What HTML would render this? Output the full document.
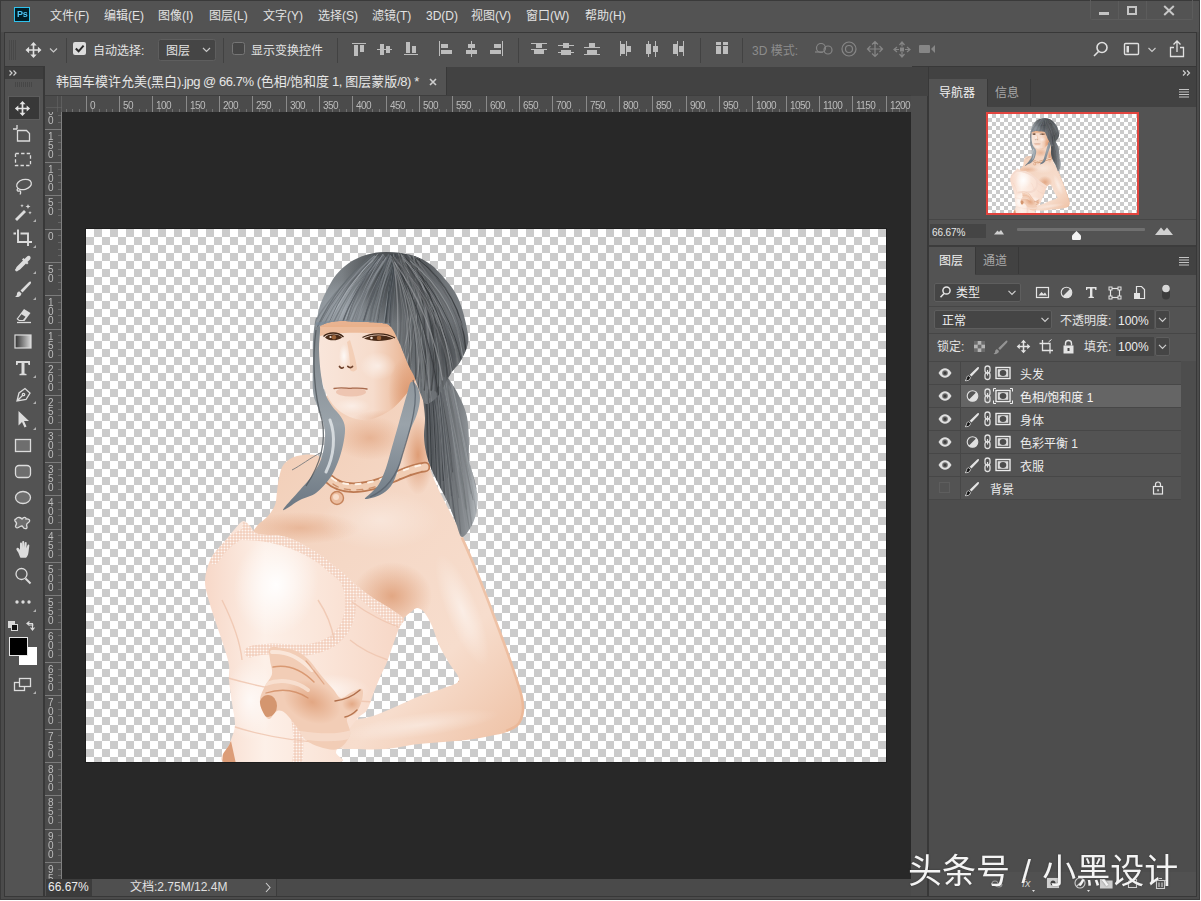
<!DOCTYPE html>
<html lang="zh-CN">
<head>
<meta charset="utf-8">
<title>Photoshop</title>
<style>
*{box-sizing:border-box;margin:0;padding:0}
html,body{width:1201px;height:901px;overflow:hidden;background:#fff}
body{font-family:"Liberation Sans","Noto Sans CJK SC",sans-serif;font-size:12px;color:#dedede;position:relative}
.a{position:absolute}
.t{position:absolute;white-space:nowrap;line-height:16px;height:16px}
#win{position:absolute;left:0;top:0;width:1200px;height:900px;background:#535353;overflow:hidden}
svg{position:absolute;overflow:visible}
.l{letter-spacing:-.45px}
.mn{color:#e2e2e2;font-size:12px}
</style>
</head>
<body>
<div id="win">
<!-- ===== window frame & base regions ===== -->
<div class="a" style="left:0;top:0;width:1200px;height:900px;background:#4b4b4b"></div>
<div class="a" style="left:1px;top:1px;width:1198px;height:31px;background:#535353"></div>
<!-- options bar -->
<div class="a" style="left:4px;top:32px;width:1193px;height:35px;background:#535353;border:1px solid #383838"></div>
<!-- left toolbar -->
<div class="a" style="left:4px;top:66px;width:40px;height:831px;background:#535353;border:1px solid #383838"></div>
<div class="a" style="left:5px;top:67px;width:38px;height:12px;background:#3e3e3e"></div>
<!-- document area -->
<div class="a" style="left:44px;top:66px;width:868px;height:831px;background:#535353;border-left:1px solid #383838"></div>
<div class="a" style="left:46px;top:67px;width:866px;height:29px;background:#424242"></div>
<div class="a" style="left:46px;top:67px;width:401px;height:29px;background:#535353;border-right:1px solid #383838"></div>
<!-- canvas -->
<div class="a" style="left:62px;top:112px;width:849px;height:767px;background:#282828"></div>
<!-- status bar -->
<div class="a" style="left:46px;top:879px;width:865px;height:17px;background:#4a4a4a"></div>
<div class="a" style="left:4px;top:896px;width:1193px;height:1px;background:#383838"></div>
<!-- gutter between doc and panels -->
<div class="a" style="left:911px;top:67px;width:16px;height:829px;background:#4d4d4d"></div>
<div class="a" style="left:927px;top:67px;width:2px;height:829px;background:#383838"></div>
<!-- right panel column -->
<div class="a" style="left:929px;top:67px;width:267px;height:829px;background:#535353"></div>
<div class="a" style="left:929px;top:67px;width:267px;height:12px;background:#424242"></div>
<div class="a" style="left:1196px;top:32px;width:1px;height:865px;background:#383838"></div>
<!-- outer edge -->
<div class="a" style="left:0;top:0;width:1200px;height:900px;border:1px solid #3a3a3a"></div>
<!-- ===== menu bar ===== -->
<div class="a" style="left:14px;top:7px;width:16px;height:15px;background:#001d26;border:1px solid #2fc2ee"></div>
<div class="t" style="left:17px;top:7px;font-size:9px;font-weight:bold;line-height:15px;height:15px;color:#4fc6f5;letter-spacing:-.3px;will-change:transform">Ps</div>
<div class="t mn" style="left:50px;top:8px">文件(F)</div>
<div class="t mn" style="left:104px;top:8px">编辑(E)</div>
<div class="t mn" style="left:158px;top:8px">图像(I)</div>
<div class="t mn" style="left:209px;top:8px">图层(L)</div>
<div class="t mn" style="left:263px;top:8px">文字(Y)</div>
<div class="t mn" style="left:318px;top:8px">选择(S)</div>
<div class="t mn" style="left:372px;top:8px">滤镜(T)</div>
<div class="t mn" style="left:426px;top:8px">3D(D)</div>
<div class="t mn" style="left:471px;top:8px">视图(V)</div>
<div class="t mn" style="left:526px;top:8px">窗口(W)</div>
<div class="t mn" style="left:585px;top:8px">帮助(H)</div>
<!-- window controls -->
<div class="a" style="left:1090px;top:0;width:103px;height:20px;border:1px solid #5c5c5c;border-top:none;border-radius:0 0 2px 2px"></div>
<div class="a" style="left:1118px;top:1px;width:1px;height:18px;background:#5c5c5c"></div>
<div class="a" style="left:1146px;top:1px;width:1px;height:18px;background:#5c5c5c"></div>
<div class="a" style="left:1099px;top:12px;width:10px;height:3px;background:#c4c4c4"></div>
<div class="a" style="left:1127px;top:6px;width:10px;height:9px;border:2px solid #c4c4c4;border-top-width:2px"></div>
<svg style="left:1163px;top:5px" width="12" height="11" viewBox="0 0 12 11"><path d="M1.2 1 L10.8 10 M10.8 1 L1.2 10" stroke="#c8c8c8" stroke-width="2" fill="none"/></svg>
<!-- ===== options bar ===== -->
<svg style="left:0;top:32px" width="1200" height="35" viewBox="0 32 1200 35">
 <!-- grip -->
 <g fill="#484848"><rect x="9" y="40" width="1" height="20"/><rect x="11" y="40" width="1" height="20"/><rect x="13" y="40" width="1" height="20"/><rect x="15" y="40" width="1" height="20"/></g>
 <!-- move tool -->
 <g fill="#e0e0e0" stroke="none">
  <path d="M33.5 42 l3.2 3.6 h-2.4 v3.6 h3.6 v-2.4 l3.6 3.2 l-3.6 3.2 v-2.4 h-3.6 v3.6 h2.4 l-3.2 3.6 l-3.2 -3.6 h2.4 v-3.6 h-3.6 v2.4 l-3.6 -3.2 l3.6 -3.2 v2.4 h3.6 v-3.6 h-2.4 z"/>
 </g>
 <path d="M50 48.5 l3.5 3.5 l3.5 -3.5" fill="none" stroke="#c8c8c8" stroke-width="1.2"/>
 <!-- separators -->
 <g fill="#424242"><rect x="66" y="38" width="1" height="25"/><rect x="223" y="38" width="1" height="25"/><rect x="337" y="38" width="1" height="25"/><rect x="518" y="38" width="1" height="25"/><rect x="700" y="38" width="1" height="25"/><rect x="742" y="38" width="1" height="25"/></g>
 <!-- checkbox checked -->
 <rect x="73" y="42" width="13" height="13" rx="2" fill="#dcdcdc"/>
 <path d="M75.8 48.5 l2.8 2.8 l5 -5.6" fill="none" stroke="#2a2a2a" stroke-width="2"/>
 <!-- dropdown -->
 <rect x="158.5" y="39.5" width="57" height="21" rx="2" fill="#454545" stroke="#5e5e5e"/>
 <path d="M203 48 l3.5 3.5 l3.5 -3.5" fill="none" stroke="#c8c8c8" stroke-width="1.2"/>
 <!-- checkbox unchecked -->
 <rect x="232.5" y="42.5" width="12" height="12" rx="2" fill="#464646" stroke="#767676"/>
 <!-- align icons -->
 <g fill="#bdbdbd">
  <rect x="352" y="43" width="14" height="1"/><rect x="354" y="45" width="4" height="11"/><rect x="360" y="45" width="4" height="7"/>
  <rect x="377" y="49" width="15" height="1"/><rect x="380" y="44" width="4" height="11"/><rect x="386" y="46" width="4" height="7"/>
  <rect x="404" y="54" width="14" height="1"/><rect x="406" y="42" width="4" height="11"/><rect x="412" y="46" width="4" height="7"/>
  <rect x="439" y="41" width="1" height="15"/><rect x="441" y="44" width="7" height="4"/><rect x="441" y="50" width="11" height="4"/>
  <rect x="471" y="41" width="1" height="16"/><rect x="468" y="44" width="7" height="4"/><rect x="466" y="50" width="11" height="4"/>
  <rect x="502" y="41" width="1" height="15"/><rect x="494" y="44" width="7" height="4"/><rect x="490" y="50" width="11" height="4"/>
  <!-- distribute -->
  <rect x="531" y="43" width="16" height="1"/><rect x="536" y="44" width="6" height="4"/><rect x="531" y="49" width="16" height="1"/><rect x="534" y="50" width="10" height="4"/>
  <rect x="558" y="45" width="16" height="1"/><rect x="563" y="43" width="6" height="5"/><rect x="558" y="52" width="16" height="1"/><rect x="561" y="50" width="10" height="5"/>
  <rect x="584" y="47" width="16" height="1"/><rect x="589" y="43" width="6" height="4"/><rect x="584" y="54" width="16" height="1"/><rect x="587" y="50" width="10" height="4"/>
  <rect x="620" y="41" width="1" height="15"/><rect x="621" y="44" width="4" height="10"/><rect x="626" y="41" width="1" height="15"/><rect x="627" y="46" width="4" height="6"/>
  <rect x="648" y="41" width="1" height="16"/><rect x="646" y="44" width="5" height="10"/><rect x="655" y="41" width="1" height="16"/><rect x="653" y="46" width="5" height="6"/>
  <rect x="677" y="41" width="1" height="15"/><rect x="673" y="44" width="4" height="10"/><rect x="683" y="41" width="1" height="15"/><rect x="679" y="46" width="4" height="6"/>
  <!-- auto align -->
  <rect x="716" y="42" width="5" height="3"/><rect x="723" y="42" width="5" height="3"/><rect x="716" y="46" width="5" height="8"/><rect x="723" y="46" width="5" height="8"/>
 </g>
 <!-- 3D mode icons (dim) -->
 <g fill="none" stroke="#868686" stroke-width="1.2">
  <circle cx="821" cy="48" r="4.5"/><circle cx="828" cy="50" r="4"/><path d="M815 52 h8"/>
  <circle cx="849" cy="49" r="7"/><circle cx="849" cy="49" r="3.5"/>
  <path d="M875 42 v14 M868 49 h14 M872 44.5 l3 -3 l3 3 M872 53.5 l3 3 l3 -3 M870.5 46 l-3 3 l3 3 M879.5 46 l3 3 l-3 3"/>
  <path d="M902 42.5 v4 M902 52 v4.5 M895 49.5 h4 M905 49.5 h4.5 M899.5 45 l2.5 -3 l2.5 3 M899.5 54 l2.5 3 l2.5 -3 M897 47 l-3 2.500 l3 2.500 M907 47 l3 2.500 l-3 2.500"/>
 </g>
 <g fill="#868686"><rect x="900" y="47.500" width="4" height="4"/><rect x="919" y="45" width="11" height="8" rx="1"/><path d="M931 49 l4 -4 v8 z"/></g>
 <!-- right icons -->
 <g fill="none" stroke="#e0e0e0" stroke-width="1.6">
  <circle cx="1102" cy="47.5" r="5"/><path d="M1098.500 51.500 l-4.500 4.500"/>
 </g>
 <rect x="1124.500" y="43.500" width="14" height="11" rx="1" fill="none" stroke="#e0e0e0" stroke-width="1.4"/>
 <rect x="1126.500" y="46" width="2.500" height="6.500" fill="#e0e0e0"/>
 <path d="M1148.500 48 l3.500 3.500 l3.500 -3.500" fill="none" stroke="#c8c8c8" stroke-width="1.2"/>
 <g fill="none" stroke="#e0e0e0" stroke-width="1.3"><path d="M1174 47.500 h-3.500 v9 h13 v-9 h-3.500"/><path d="M1177 52 v-11 M1173.500 44.500 l3.500 -3.500 l3.500 3.500"/></g>
</svg>
<div class="t" style="left:93px;top:42.500px;color:#e2e2e2">自动选择:</div>
<div class="t" style="left:166px;top:42.500px;color:#e2e2e2">图层</div>
<div class="t" style="left:251px;top:42.500px;color:#e2e2e2">显示变换控件</div>
<div class="t" style="left:752px;top:42.500px;color:#8c8c8c">3D 模式:</div>
<!-- ===== document tab + rulers ===== -->
<div class="a" style="left:46px;top:67px;width:882px;height:29px;background:#424242"></div>
<div class="a" style="left:46px;top:67px;width:401px;height:29px;background:#535353;border-right:1px solid #383838"></div>
<div class="t" style="left:56px;top:73px;color:#e6e6e6;font-size:13px;line-height:18px;height:18px">韩国车模许允美<span class="l">(</span>黑白<span class="l">).jpg @ 66.7% (</span>色相<span class="l">/</span>饱和度<span class="l"> 1, </span>图层蒙版<span class="l">/8) *</span></div>
<svg style="left:429px;top:78px" width="8" height="8" viewBox="0 0 8 8"><path d="M1 1 L7 7 M7 1 L1 7" stroke="#cfcfcf" stroke-width="1.6" fill="none"/></svg>
<div class="a" style="left:45px;top:95px;width:866px;height:17px;background:#4b4b4b;border-top:1px solid #3e3e3e"></div>
<div class="a" style="left:45px;top:112px;width:17px;height:767px;background:#4b4b4b"></div>
<svg style="left:0;top:0" width="912" height="880" viewBox="0 0 912 880" font-family="Liberation Sans, sans-serif" font-size="10">
<defs><clipPath id="rc1"><rect x="62" y="96" width="849" height="16"/></clipPath><clipPath id="rc2"><rect x="45" y="112" width="17" height="767"/></clipPath></defs>
<g fill="#6a6a6a"><rect x="57" y="96" width="1" height="16" opacity=".5"/><rect x="46" y="107" width="16" height="1" opacity=".5"/><rect x="61" y="96" width="1" height="16" opacity=".6"/></g>
<g clip-path="url(#rc1)">
<g fill="#8a8a8a"><rect x="86" y="96" width="1" height="16"/><rect x="119" y="96" width="1" height="16"/><rect x="152" y="96" width="1" height="16"/><rect x="186" y="96" width="1" height="16"/><rect x="219" y="96" width="1" height="16"/><rect x="252" y="96" width="1" height="16"/><rect x="286" y="96" width="1" height="16"/><rect x="319" y="96" width="1" height="16"/><rect x="352" y="96" width="1" height="16"/><rect x="386" y="96" width="1" height="16"/><rect x="419" y="96" width="1" height="16"/><rect x="452" y="96" width="1" height="16"/><rect x="486" y="96" width="1" height="16"/><rect x="519" y="96" width="1" height="16"/><rect x="552" y="96" width="1" height="16"/><rect x="586" y="96" width="1" height="16"/><rect x="619" y="96" width="1" height="16"/><rect x="652" y="96" width="1" height="16"/><rect x="686" y="96" width="1" height="16"/><rect x="719" y="96" width="1" height="16"/><rect x="752" y="96" width="1" height="16"/><rect x="786" y="96" width="1" height="16"/><rect x="819" y="96" width="1" height="16"/><rect x="852" y="96" width="1" height="16"/><rect x="886" y="96" width="1" height="16"/></g>
<g fill="#707070"><rect x="66" y="109" width="1" height="3"/><rect x="72" y="109" width="1" height="3"/><rect x="79" y="109" width="1" height="3"/><rect x="92" y="109" width="1" height="3"/><rect x="99" y="109" width="1" height="3"/><rect x="106" y="109" width="1" height="3"/><rect x="112" y="109" width="1" height="3"/><rect x="126" y="109" width="1" height="3"/><rect x="132" y="109" width="1" height="3"/><rect x="139" y="109" width="1" height="3"/><rect x="146" y="109" width="1" height="3"/><rect x="159" y="109" width="1" height="3"/><rect x="166" y="109" width="1" height="3"/><rect x="172" y="109" width="1" height="3"/><rect x="179" y="109" width="1" height="3"/><rect x="192" y="109" width="1" height="3"/><rect x="199" y="109" width="1" height="3"/><rect x="206" y="109" width="1" height="3"/><rect x="212" y="109" width="1" height="3"/><rect x="226" y="109" width="1" height="3"/><rect x="232" y="109" width="1" height="3"/><rect x="239" y="109" width="1" height="3"/><rect x="246" y="109" width="1" height="3"/><rect x="259" y="109" width="1" height="3"/><rect x="266" y="109" width="1" height="3"/><rect x="272" y="109" width="1" height="3"/><rect x="279" y="109" width="1" height="3"/><rect x="292" y="109" width="1" height="3"/><rect x="299" y="109" width="1" height="3"/><rect x="306" y="109" width="1" height="3"/><rect x="312" y="109" width="1" height="3"/><rect x="326" y="109" width="1" height="3"/><rect x="332" y="109" width="1" height="3"/><rect x="339" y="109" width="1" height="3"/><rect x="346" y="109" width="1" height="3"/><rect x="359" y="109" width="1" height="3"/><rect x="366" y="109" width="1" height="3"/><rect x="372" y="109" width="1" height="3"/><rect x="379" y="109" width="1" height="3"/><rect x="392" y="109" width="1" height="3"/><rect x="399" y="109" width="1" height="3"/><rect x="406" y="109" width="1" height="3"/><rect x="412" y="109" width="1" height="3"/><rect x="426" y="109" width="1" height="3"/><rect x="432" y="109" width="1" height="3"/><rect x="439" y="109" width="1" height="3"/><rect x="446" y="109" width="1" height="3"/><rect x="459" y="109" width="1" height="3"/><rect x="466" y="109" width="1" height="3"/><rect x="472" y="109" width="1" height="3"/><rect x="479" y="109" width="1" height="3"/><rect x="492" y="109" width="1" height="3"/><rect x="499" y="109" width="1" height="3"/><rect x="506" y="109" width="1" height="3"/><rect x="512" y="109" width="1" height="3"/><rect x="526" y="109" width="1" height="3"/><rect x="532" y="109" width="1" height="3"/><rect x="539" y="109" width="1" height="3"/><rect x="546" y="109" width="1" height="3"/><rect x="559" y="109" width="1" height="3"/><rect x="566" y="109" width="1" height="3"/><rect x="572" y="109" width="1" height="3"/><rect x="579" y="109" width="1" height="3"/><rect x="592" y="109" width="1" height="3"/><rect x="599" y="109" width="1" height="3"/><rect x="606" y="109" width="1" height="3"/><rect x="612" y="109" width="1" height="3"/><rect x="626" y="109" width="1" height="3"/><rect x="632" y="109" width="1" height="3"/><rect x="639" y="109" width="1" height="3"/><rect x="646" y="109" width="1" height="3"/><rect x="659" y="109" width="1" height="3"/><rect x="666" y="109" width="1" height="3"/><rect x="672" y="109" width="1" height="3"/><rect x="679" y="109" width="1" height="3"/><rect x="692" y="109" width="1" height="3"/><rect x="699" y="109" width="1" height="3"/><rect x="706" y="109" width="1" height="3"/><rect x="712" y="109" width="1" height="3"/><rect x="726" y="109" width="1" height="3"/><rect x="732" y="109" width="1" height="3"/><rect x="739" y="109" width="1" height="3"/><rect x="746" y="109" width="1" height="3"/><rect x="759" y="109" width="1" height="3"/><rect x="766" y="109" width="1" height="3"/><rect x="772" y="109" width="1" height="3"/><rect x="779" y="109" width="1" height="3"/><rect x="792" y="109" width="1" height="3"/><rect x="799" y="109" width="1" height="3"/><rect x="806" y="109" width="1" height="3"/><rect x="812" y="109" width="1" height="3"/><rect x="826" y="109" width="1" height="3"/><rect x="832" y="109" width="1" height="3"/><rect x="839" y="109" width="1" height="3"/><rect x="846" y="109" width="1" height="3"/><rect x="859" y="109" width="1" height="3"/><rect x="866" y="109" width="1" height="3"/><rect x="872" y="109" width="1" height="3"/><rect x="879" y="109" width="1" height="3"/><rect x="892" y="109" width="1" height="3"/><rect x="899" y="109" width="1" height="3"/><rect x="906" y="109" width="1" height="3"/></g>
<g fill="#666"></g>
<g fill="#bcbcbc"><text x="90" y="109" letter-spacing="-.55">0</text><text x="123" y="109" letter-spacing="-.55">50</text><text x="156" y="109" letter-spacing="-.55">100</text><text x="190" y="109" letter-spacing="-.55">150</text><text x="223" y="109" letter-spacing="-.55">200</text><text x="256" y="109" letter-spacing="-.55">250</text><text x="290" y="109" letter-spacing="-.55">300</text><text x="323" y="109" letter-spacing="-.55">350</text><text x="356" y="109" letter-spacing="-.55">400</text><text x="390" y="109" letter-spacing="-.55">450</text><text x="423" y="109" letter-spacing="-.55">500</text><text x="456" y="109" letter-spacing="-.55">550</text><text x="490" y="109" letter-spacing="-.55">600</text><text x="523" y="109" letter-spacing="-.55">650</text><text x="556" y="109" letter-spacing="-.55">700</text><text x="590" y="109" letter-spacing="-.55">750</text><text x="623" y="109" letter-spacing="-.55">800</text><text x="656" y="109" letter-spacing="-.55">850</text><text x="690" y="109" letter-spacing="-.55">900</text><text x="723" y="109" letter-spacing="-.55">950</text><text x="756" y="109" letter-spacing="-.55">1000</text><text x="790" y="109" letter-spacing="-.55">1050</text><text x="823" y="109" letter-spacing="-.55">1100</text><text x="856" y="109" letter-spacing="-.55">1150</text><text x="890" y="109" letter-spacing="-.55">1200</text></g>
</g>
<g clip-path="url(#rc2)">
<g fill="#7c7c7c"><rect x="45" y="95" width="17" height="1"/><rect x="45" y="129" width="17" height="1"/><rect x="45" y="162" width="17" height="1"/><rect x="45" y="195" width="17" height="1"/><rect x="45" y="229" width="17" height="1"/><rect x="45" y="262" width="17" height="1"/><rect x="45" y="295" width="17" height="1"/><rect x="45" y="329" width="17" height="1"/><rect x="45" y="362" width="17" height="1"/><rect x="45" y="395" width="17" height="1"/><rect x="45" y="429" width="17" height="1"/><rect x="45" y="462" width="17" height="1"/><rect x="45" y="495" width="17" height="1"/><rect x="45" y="529" width="17" height="1"/><rect x="45" y="562" width="17" height="1"/><rect x="45" y="595" width="17" height="1"/><rect x="45" y="629" width="17" height="1"/><rect x="45" y="662" width="17" height="1"/><rect x="45" y="695" width="17" height="1"/><rect x="45" y="729" width="17" height="1"/><rect x="45" y="762" width="17" height="1"/><rect x="45" y="795" width="17" height="1"/><rect x="45" y="829" width="17" height="1"/><rect x="45" y="862" width="17" height="1"/></g>
<g fill="#676767"><rect x="58" y="102" width="3" height="1"/><rect x="58" y="109" width="3" height="1"/><rect x="58" y="115" width="3" height="1"/><rect x="58" y="122" width="3" height="1"/><rect x="58" y="135" width="3" height="1"/><rect x="58" y="142" width="3" height="1"/><rect x="58" y="149" width="3" height="1"/><rect x="58" y="155" width="3" height="1"/><rect x="58" y="169" width="3" height="1"/><rect x="58" y="175" width="3" height="1"/><rect x="58" y="182" width="3" height="1"/><rect x="58" y="189" width="3" height="1"/><rect x="58" y="202" width="3" height="1"/><rect x="58" y="209" width="3" height="1"/><rect x="58" y="215" width="3" height="1"/><rect x="58" y="222" width="3" height="1"/><rect x="58" y="235" width="3" height="1"/><rect x="58" y="242" width="3" height="1"/><rect x="58" y="249" width="3" height="1"/><rect x="58" y="255" width="3" height="1"/><rect x="58" y="269" width="3" height="1"/><rect x="58" y="275" width="3" height="1"/><rect x="58" y="282" width="3" height="1"/><rect x="58" y="289" width="3" height="1"/><rect x="58" y="302" width="3" height="1"/><rect x="58" y="309" width="3" height="1"/><rect x="58" y="315" width="3" height="1"/><rect x="58" y="322" width="3" height="1"/><rect x="58" y="335" width="3" height="1"/><rect x="58" y="342" width="3" height="1"/><rect x="58" y="349" width="3" height="1"/><rect x="58" y="355" width="3" height="1"/><rect x="58" y="369" width="3" height="1"/><rect x="58" y="375" width="3" height="1"/><rect x="58" y="382" width="3" height="1"/><rect x="58" y="389" width="3" height="1"/><rect x="58" y="402" width="3" height="1"/><rect x="58" y="409" width="3" height="1"/><rect x="58" y="415" width="3" height="1"/><rect x="58" y="422" width="3" height="1"/><rect x="58" y="435" width="3" height="1"/><rect x="58" y="442" width="3" height="1"/><rect x="58" y="449" width="3" height="1"/><rect x="58" y="455" width="3" height="1"/><rect x="58" y="469" width="3" height="1"/><rect x="58" y="475" width="3" height="1"/><rect x="58" y="482" width="3" height="1"/><rect x="58" y="489" width="3" height="1"/><rect x="58" y="502" width="3" height="1"/><rect x="58" y="509" width="3" height="1"/><rect x="58" y="515" width="3" height="1"/><rect x="58" y="522" width="3" height="1"/><rect x="58" y="535" width="3" height="1"/><rect x="58" y="542" width="3" height="1"/><rect x="58" y="549" width="3" height="1"/><rect x="58" y="555" width="3" height="1"/><rect x="58" y="569" width="3" height="1"/><rect x="58" y="575" width="3" height="1"/><rect x="58" y="582" width="3" height="1"/><rect x="58" y="589" width="3" height="1"/><rect x="58" y="602" width="3" height="1"/><rect x="58" y="609" width="3" height="1"/><rect x="58" y="615" width="3" height="1"/><rect x="58" y="622" width="3" height="1"/><rect x="58" y="635" width="3" height="1"/><rect x="58" y="642" width="3" height="1"/><rect x="58" y="649" width="3" height="1"/><rect x="58" y="655" width="3" height="1"/><rect x="58" y="669" width="3" height="1"/><rect x="58" y="675" width="3" height="1"/><rect x="58" y="682" width="3" height="1"/><rect x="58" y="689" width="3" height="1"/><rect x="58" y="702" width="3" height="1"/><rect x="58" y="709" width="3" height="1"/><rect x="58" y="715" width="3" height="1"/><rect x="58" y="722" width="3" height="1"/><rect x="58" y="735" width="3" height="1"/><rect x="58" y="742" width="3" height="1"/><rect x="58" y="749" width="3" height="1"/><rect x="58" y="755" width="3" height="1"/><rect x="58" y="769" width="3" height="1"/><rect x="58" y="775" width="3" height="1"/><rect x="58" y="782" width="3" height="1"/><rect x="58" y="789" width="3" height="1"/><rect x="58" y="802" width="3" height="1"/><rect x="58" y="809" width="3" height="1"/><rect x="58" y="815" width="3" height="1"/><rect x="58" y="822" width="3" height="1"/><rect x="58" y="835" width="3" height="1"/><rect x="58" y="842" width="3" height="1"/><rect x="58" y="849" width="3" height="1"/><rect x="58" y="855" width="3" height="1"/><rect x="58" y="869" width="3" height="1"/><rect x="58" y="875" width="3" height="1"/></g>
<g fill="#666"></g>
<g fill="#bcbcbc"><text x="48"><tspan x="48" y="105.7">2</tspan><tspan x="48" y="115.0">0</tspan><tspan x="48" y="124.3">0</tspan></text><text x="48"><tspan x="48" y="139.7">1</tspan><tspan x="48" y="149.0">5</tspan><tspan x="48" y="158.3">0</tspan></text><text x="48"><tspan x="48" y="172.7">1</tspan><tspan x="48" y="182.0">0</tspan><tspan x="48" y="191.3">0</tspan></text><text x="48"><tspan x="48" y="205.7">5</tspan><tspan x="48" y="215.0">0</tspan></text><text x="48"><tspan x="48" y="239.7">0</tspan></text><text x="48"><tspan x="48" y="272.7">5</tspan><tspan x="48" y="282.0">0</tspan></text><text x="48"><tspan x="48" y="305.7">1</tspan><tspan x="48" y="315.0">0</tspan><tspan x="48" y="324.3">0</tspan></text><text x="48"><tspan x="48" y="339.7">1</tspan><tspan x="48" y="349.0">5</tspan><tspan x="48" y="358.3">0</tspan></text><text x="48"><tspan x="48" y="372.7">2</tspan><tspan x="48" y="382.0">0</tspan><tspan x="48" y="391.3">0</tspan></text><text x="48"><tspan x="48" y="405.7">2</tspan><tspan x="48" y="415.0">5</tspan><tspan x="48" y="424.3">0</tspan></text><text x="48"><tspan x="48" y="439.7">3</tspan><tspan x="48" y="449.0">0</tspan><tspan x="48" y="458.3">0</tspan></text><text x="48"><tspan x="48" y="472.7">3</tspan><tspan x="48" y="482.0">5</tspan><tspan x="48" y="491.3">0</tspan></text><text x="48"><tspan x="48" y="505.7">4</tspan><tspan x="48" y="515.0">0</tspan><tspan x="48" y="524.3">0</tspan></text><text x="48"><tspan x="48" y="539.7">4</tspan><tspan x="48" y="549.0">5</tspan><tspan x="48" y="558.3">0</tspan></text><text x="48"><tspan x="48" y="572.7">5</tspan><tspan x="48" y="582.0">0</tspan><tspan x="48" y="591.3">0</tspan></text><text x="48"><tspan x="48" y="605.7">5</tspan><tspan x="48" y="615.0">5</tspan><tspan x="48" y="624.3">0</tspan></text><text x="48"><tspan x="48" y="639.7">6</tspan><tspan x="48" y="649.0">0</tspan><tspan x="48" y="658.3">0</tspan></text><text x="48"><tspan x="48" y="672.7">6</tspan><tspan x="48" y="682.0">5</tspan><tspan x="48" y="691.3">0</tspan></text><text x="48"><tspan x="48" y="705.7">7</tspan><tspan x="48" y="715.0">0</tspan><tspan x="48" y="724.3">0</tspan></text><text x="48"><tspan x="48" y="739.7">7</tspan><tspan x="48" y="749.0">5</tspan><tspan x="48" y="758.3">0</tspan></text><text x="48"><tspan x="48" y="772.7">8</tspan><tspan x="48" y="782.0">0</tspan><tspan x="48" y="791.3">0</tspan></text><text x="48"><tspan x="48" y="805.7">8</tspan><tspan x="48" y="815.0">5</tspan><tspan x="48" y="824.3">0</tspan></text><text x="48"><tspan x="48" y="839.7">9</tspan><tspan x="48" y="849.0">0</tspan><tspan x="48" y="858.3">0</tspan></text><text x="48"><tspan x="48" y="872.7">9</tspan><tspan x="48" y="882.0">5</tspan><tspan x="48" y="891.3">0</tspan></text></g>
<rect x="61" y="112" width="1" height="767" fill="#808080"/>
</g>
</svg>
<div class="a" style="left:46px;top:879px;width:46px;height:17px;background:#3c3c3c"></div>
<div class="a" style="left:92px;top:879px;width:185px;height:17px;background:#4f4f4f;border-right:1px solid #3c3c3c"></div>
<div class="t" style="left:48px;top:879px;color:#ececec;font-size:12px;line-height:17px;height:17px">66.67%</div>
<div class="t" style="left:130px;top:879px;color:#e0e0e0;font-size:12px;line-height:17px;height:17px">文档:2.75M/12.4M</div>
<svg style="left:265px;top:882px" width="6" height="11" viewBox="0 0 6 11"><path d="M1 1 L5 5.5 L1 10" stroke="#cfcfcf" stroke-width="1.1" fill="none"/></svg>
<!-- ===== canvas: transparency grid + cut-out figure ===== -->
<div class="a" style="left:85px;top:228px;width:802px;height:535px;background:#1e1e1e"></div>
<div class="a" style="left:86px;top:229px;width:800px;height:533px;background:repeating-conic-gradient(#cbcbcb 0 25%,#fff 0 50%) 0 0/16px 16px"></div>
<svg style="left:86px;top:229px;overflow:hidden" width="800" height="533" viewBox="86 229 800 533">
<defs>
<linearGradient id="gHair" gradientUnits="userSpaceOnUse" x1="320" y1="330" x2="460" y2="270"><stop offset="0" stop-color="#8f969c"/><stop offset=".35" stop-color="#757a7e"/><stop offset=".7" stop-color="#64686c"/><stop offset="1" stop-color="#7a7f83"/></linearGradient>
<radialGradient id="gCrown" gradientUnits="userSpaceOnUse" cx="394" cy="272" r="52"><stop offset="0" stop-color="#34383b" stop-opacity=".85"/><stop offset=".5" stop-color="#3a3e41" stop-opacity=".5"/><stop offset="1" stop-color="#3e4245" stop-opacity="0"/></radialGradient>
<radialGradient id="gHairDk" gradientUnits="userSpaceOnUse" cx="440" cy="352" r="34"><stop offset="0" stop-color="#3c4043" stop-opacity=".6"/><stop offset="1" stop-color="#35393c" stop-opacity="0"/></radialGradient>
<radialGradient id="gBang" gradientUnits="userSpaceOnUse" cx="342" cy="310" r="30"><stop offset="0" stop-color="#a3abb2" stop-opacity=".9"/><stop offset="1" stop-color="#a3abb2" stop-opacity="0"/></radialGradient>
<linearGradient id="gPony" gradientUnits="userSpaceOnUse" x1="424" y1="0" x2="478" y2="0"><stop offset="0" stop-color="#5e6266"/><stop offset=".5" stop-color="#6c7074"/><stop offset=".8" stop-color="#8b9094"/><stop offset="1" stop-color="#b9bec2"/></linearGradient>
<linearGradient id="gStr" gradientUnits="userSpaceOnUse" x1="0" y1="320" x2="0" y2="510"><stop offset="0" stop-color="#7d8489"/><stop offset=".55" stop-color="#9aa3aa"/><stop offset="1" stop-color="#6c7782"/></linearGradient>
<linearGradient id="gSkin" gradientUnits="userSpaceOnUse" x1="250" y1="460" x2="530" y2="740"><stop offset="0" stop-color="#f2ceb7"/><stop offset=".35" stop-color="#f5d8c6"/><stop offset=".7" stop-color="#f7ddcd"/><stop offset="1" stop-color="#eec0a3"/></linearGradient>
<linearGradient id="gFace" gradientUnits="userSpaceOnUse" x1="318" y1="0" x2="418" y2="0"><stop offset="0" stop-color="#f9e6db"/><stop offset=".55" stop-color="#f6dccc"/><stop offset="1" stop-color="#e6a982"/></linearGradient>
<linearGradient id="gDress" gradientUnits="userSpaceOnUse" x1="205" y1="0" x2="405" y2="0"><stop offset="0" stop-color="#f7d8c8"/><stop offset=".3" stop-color="#fdf0e8"/><stop offset=".65" stop-color="#fae3d6"/><stop offset="1" stop-color="#f6d6c5"/></linearGradient>
<radialGradient id="gHi" cx=".5" cy=".5" r=".5"><stop offset="0" stop-color="#fff"/><stop offset="1" stop-color="#fff" stop-opacity="0"/></radialGradient>
<radialGradient id="gSh" cx=".5" cy=".5" r=".5"><stop offset="0" stop-color="#dd9a72"/><stop offset="1" stop-color="#dd9a72" stop-opacity="0"/></radialGradient>
<pattern id="lace" width="3" height="3" patternUnits="userSpaceOnUse"><rect width="3" height="3" fill="#f8dfd2"/><circle cx="1" cy="1" r=".8" fill="#edc3ad"/><circle cx="2.500" cy="2.500" r=".5" fill="#fff"/></pattern>
<clipPath id="cHair"><path d="M316.0 327.0 C314.5 325.5 317.2 318.0 318.0 314.0 C318.8 310.0 319.5 307.0 321.0 303.0 C322.5 299.0 324.5 294.7 327.0 290.0 C329.5 285.3 332.3 279.5 336.0 275.0 C339.7 270.5 344.0 266.3 349.0 263.0 C354.0 259.7 359.8 256.8 366.0 255.0 C372.2 253.2 378.5 252.0 386.0 252.0 C393.5 252.0 403.7 253.0 411.0 255.0 C418.3 257.0 424.3 260.0 430.0 264.0 C435.7 268.0 440.7 274.0 445.0 279.0 C449.3 284.0 453.0 288.5 456.0 294.0 C459.0 299.5 461.0 305.2 463.0 312.0 C465.0 318.8 467.3 329.2 468.0 335.0 C468.7 340.8 468.3 342.5 467.0 347.0 C465.7 351.5 462.7 357.7 460.0 362.0 C457.3 366.3 453.7 369.0 451.0 373.0 C448.3 377.0 446.5 381.8 444.0 386.0 C441.5 390.2 439.0 395.0 436.0 398.0 C433.0 401.0 428.5 404.5 426.0 404.0 C423.5 403.5 422.5 398.3 421.0 395.0 C419.5 391.7 418.2 387.2 417.0 384.0 C415.8 380.8 415.5 379.3 414.0 376.0 C412.5 372.7 410.5 369.7 408.0 364.0 C405.5 358.3 402.0 348.3 399.0 342.0 C396.0 335.7 393.2 329.2 390.0 326.0 C386.8 322.8 385.0 323.7 380.0 323.0 C375.0 322.3 366.7 322.3 360.0 322.0 C353.3 321.7 345.5 320.8 340.0 321.0 C334.5 321.2 331.0 322.0 327.0 323.0 C323.0 324.0 317.5 328.5 316.0 327.0Z"/></clipPath>
<clipPath id="cPony"><path d="M422.0 378.0 C424.8 373.3 435.0 369.0 440.0 370.0 C445.0 371.0 448.5 379.0 452.0 384.0 C455.5 389.0 458.5 394.5 461.0 400.0 C463.5 405.5 465.7 410.3 467.0 417.0 C468.3 423.7 468.7 432.8 469.0 440.0 C469.3 447.2 468.3 454.2 469.0 460.0 C469.7 465.8 471.7 469.7 473.0 475.0 C474.3 480.3 476.3 486.3 477.0 492.0 C477.7 497.7 477.8 503.5 477.0 509.0 C476.2 514.5 474.5 520.3 472.0 525.0 C469.5 529.7 464.7 537.3 462.0 537.0 C459.3 536.7 458.2 528.3 456.0 523.0 C453.8 517.7 451.7 511.0 449.0 505.0 C446.3 499.0 443.0 493.2 440.0 487.0 C437.0 480.8 433.3 473.8 431.0 468.0 C428.7 462.2 427.2 457.3 426.0 452.0 C424.8 446.7 424.2 441.7 424.0 436.0 C423.8 430.3 425.2 424.3 425.0 418.0 C424.8 411.7 423.5 404.7 423.0 398.0 C422.5 391.3 419.2 382.7 422.0 378.0Z"/></clipPath>
<clipPath id="cSkin"><path d="M326.0 396.0 C319.3 400.0 333.0 409.5 335.0 416.0 C337.0 422.5 337.8 428.5 338.0 435.0 C338.2 441.5 337.7 450.5 336.0 455.0 C334.3 459.5 331.3 462.0 328.0 462.0 C324.7 462.0 321.2 456.0 316.0 455.0 C310.8 454.0 302.3 454.5 297.0 456.0 C291.7 457.5 287.0 460.3 284.0 464.0 C281.0 467.7 280.2 473.3 279.0 478.0 C277.8 482.7 277.7 487.5 277.0 492.0 C276.3 496.5 276.5 501.0 275.0 505.0 C273.5 509.0 271.0 512.5 268.0 516.0 C265.0 519.5 259.7 522.3 257.0 526.0 C254.3 529.7 251.2 532.3 252.0 538.0 C252.8 543.7 254.0 549.7 262.0 560.0 C270.0 570.3 285.3 586.7 300.0 600.0 C314.7 613.3 334.0 635.3 350.0 640.0 C366.0 644.7 387.0 631.7 396.0 628.0 C405.0 624.3 401.5 620.7 404.0 618.0 C406.5 615.3 408.8 613.7 411.0 612.0 C413.2 610.3 414.8 608.0 417.0 608.0 C419.2 608.0 421.5 609.0 424.0 612.0 C426.5 615.0 429.5 620.5 432.0 626.0 C434.5 631.5 436.2 638.8 439.0 645.0 C441.8 651.2 445.7 657.2 449.0 663.0 C452.3 668.8 459.8 675.8 459.0 680.0 C458.2 684.2 450.5 685.3 444.0 688.0 C437.5 690.7 428.2 692.8 420.0 696.0 C411.8 699.2 402.8 703.7 395.0 707.0 C387.2 710.3 380.5 713.5 373.0 716.0 C365.5 718.5 355.5 718.8 350.0 722.0 C344.5 725.2 344.0 730.8 340.0 735.0 C336.0 739.2 323.8 744.7 326.0 747.0 C328.2 749.3 343.0 748.7 353.0 749.0 C363.0 749.3 375.0 749.8 386.0 749.0 C397.0 748.2 405.7 745.5 419.0 744.0 C432.3 742.5 454.2 741.3 466.0 740.0 C477.8 738.7 483.2 737.3 490.0 736.0 C496.8 734.7 502.2 733.8 507.0 732.0 C511.8 730.2 516.2 728.3 519.0 725.0 C521.8 721.7 523.3 716.7 524.0 712.0 C524.7 707.3 524.0 702.3 523.0 697.0 C522.0 691.7 519.8 685.8 518.0 680.0 C516.2 674.2 514.0 667.8 512.0 662.0 C510.0 656.2 508.5 651.8 506.0 645.0 C503.5 638.2 500.3 629.8 497.0 621.0 C493.7 612.2 489.5 601.0 486.0 592.0 C482.5 583.0 479.8 576.2 476.0 567.0 C472.2 557.8 467.7 546.8 463.0 537.0 C458.3 527.2 452.3 516.5 448.0 508.0 C443.7 499.5 440.0 492.7 437.0 486.0 C434.0 479.3 431.7 474.0 430.0 468.0 C428.3 462.0 427.5 458.0 427.0 450.0 C426.5 442.0 427.2 433.0 427.0 420.0 C426.8 407.0 434.7 376.7 426.0 372.0 C417.3 367.3 391.7 388.0 375.0 392.0 C358.3 396.0 332.7 392.0 326.0 396.0Z"/></clipPath>
<clipPath id="cDress"><path d="M243.0 521.0 C240.3 521.7 237.0 526.7 234.0 530.0 C231.0 533.3 228.5 536.8 225.0 541.0 C221.5 545.2 216.0 550.3 213.0 555.0 C210.0 559.7 208.3 564.5 207.0 569.0 C205.7 573.5 205.0 577.8 205.0 582.0 C205.0 586.2 205.8 589.2 207.0 594.0 C208.2 598.8 210.2 605.2 212.0 611.0 C213.8 616.8 216.0 623.0 218.0 629.0 C220.0 635.0 222.2 641.0 224.0 647.0 C225.8 653.0 228.2 659.5 229.0 665.0 C229.8 670.5 228.5 673.7 229.0 680.0 C229.5 686.3 231.0 695.5 232.0 703.0 C233.0 710.5 235.3 718.3 235.0 725.0 C234.7 731.7 231.8 736.8 230.0 743.0 C228.2 749.2 215.7 758.8 224.0 762.0 C232.3 765.2 260.7 762.0 280.0 762.0 C299.3 762.0 330.7 763.7 340.0 762.0 C349.3 760.3 335.2 756.5 336.0 752.0 C336.8 747.5 341.3 740.7 345.0 735.0 C348.7 729.3 354.3 722.2 358.0 718.0 C361.7 713.8 364.3 714.3 367.0 710.0 C369.7 705.7 371.7 697.8 374.0 692.0 C376.3 686.2 378.8 680.0 381.0 675.0 C383.2 670.0 384.8 667.5 387.0 662.0 C389.2 656.5 391.8 648.0 394.0 642.0 C396.2 636.0 398.3 629.8 400.0 626.0 C401.7 622.2 405.0 621.5 404.0 619.0 C403.0 616.5 400.3 615.3 394.0 611.0 C387.7 606.7 375.3 600.0 366.0 593.0 C356.7 586.0 346.7 576.0 338.0 569.0 C329.3 562.0 322.7 556.3 314.0 551.0 C305.3 545.7 295.3 539.8 286.0 537.0 C276.7 534.2 264.0 535.8 258.0 534.0 C252.0 532.2 252.5 528.2 250.0 526.0 C247.5 523.8 245.7 520.3 243.0 521.0Z"/></clipPath>
<clipPath id="cFace"><path d="M320.0 318.0 C313.0 322.7 318.3 333.2 318.0 340.0 C317.7 346.8 317.7 353.7 318.0 359.0 C318.3 364.3 319.2 367.7 320.0 372.0 C320.8 376.3 321.7 380.8 323.0 385.0 C324.3 389.2 326.0 393.3 328.0 397.0 C330.0 400.7 332.3 404.2 335.0 407.0 C337.7 409.8 340.5 412.0 344.0 414.0 C347.5 416.0 352.0 418.0 356.0 419.0 C360.0 420.0 364.0 420.5 368.0 420.0 C372.0 419.5 376.0 417.8 380.0 416.0 C384.0 414.2 388.3 411.8 392.0 409.0 C395.7 406.2 398.7 402.8 402.0 399.0 C405.3 395.2 409.5 390.8 412.0 386.0 C414.5 381.2 417.3 376.8 417.0 370.0 C416.7 363.2 413.7 353.7 410.0 345.0 C406.3 336.3 403.3 323.5 395.0 318.0 C386.7 312.5 372.5 312.0 360.0 312.0 C347.5 312.0 327.0 313.3 320.0 318.0Z"/></clipPath>
<g id="fig">
<path d="M326.0 396.0 C319.3 400.0 333.0 409.5 335.0 416.0 C337.0 422.5 337.8 428.5 338.0 435.0 C338.2 441.5 337.7 450.5 336.0 455.0 C334.3 459.5 331.3 462.0 328.0 462.0 C324.7 462.0 321.2 456.0 316.0 455.0 C310.8 454.0 302.3 454.5 297.0 456.0 C291.7 457.5 287.0 460.3 284.0 464.0 C281.0 467.7 280.2 473.3 279.0 478.0 C277.8 482.7 277.7 487.5 277.0 492.0 C276.3 496.5 276.5 501.0 275.0 505.0 C273.5 509.0 271.0 512.5 268.0 516.0 C265.0 519.5 259.7 522.3 257.0 526.0 C254.3 529.7 251.2 532.3 252.0 538.0 C252.8 543.7 254.0 549.7 262.0 560.0 C270.0 570.3 285.3 586.7 300.0 600.0 C314.7 613.3 334.0 635.3 350.0 640.0 C366.0 644.7 387.0 631.7 396.0 628.0 C405.0 624.3 401.5 620.7 404.0 618.0 C406.5 615.3 408.8 613.7 411.0 612.0 C413.2 610.3 414.8 608.0 417.0 608.0 C419.2 608.0 421.5 609.0 424.0 612.0 C426.5 615.0 429.5 620.5 432.0 626.0 C434.5 631.5 436.2 638.8 439.0 645.0 C441.8 651.2 445.7 657.2 449.0 663.0 C452.3 668.8 459.8 675.8 459.0 680.0 C458.2 684.2 450.5 685.3 444.0 688.0 C437.5 690.7 428.2 692.8 420.0 696.0 C411.8 699.2 402.8 703.7 395.0 707.0 C387.2 710.3 380.5 713.5 373.0 716.0 C365.5 718.5 355.5 718.8 350.0 722.0 C344.5 725.2 344.0 730.8 340.0 735.0 C336.0 739.2 323.8 744.7 326.0 747.0 C328.2 749.3 343.0 748.7 353.0 749.0 C363.0 749.3 375.0 749.8 386.0 749.0 C397.0 748.2 405.7 745.5 419.0 744.0 C432.3 742.5 454.2 741.3 466.0 740.0 C477.8 738.7 483.2 737.3 490.0 736.0 C496.8 734.7 502.2 733.8 507.0 732.0 C511.8 730.2 516.2 728.3 519.0 725.0 C521.8 721.7 523.3 716.7 524.0 712.0 C524.7 707.3 524.0 702.3 523.0 697.0 C522.0 691.7 519.8 685.8 518.0 680.0 C516.2 674.2 514.0 667.8 512.0 662.0 C510.0 656.2 508.5 651.8 506.0 645.0 C503.5 638.2 500.3 629.8 497.0 621.0 C493.7 612.2 489.5 601.0 486.0 592.0 C482.5 583.0 479.8 576.2 476.0 567.0 C472.2 557.8 467.7 546.8 463.0 537.0 C458.3 527.2 452.3 516.5 448.0 508.0 C443.7 499.5 440.0 492.7 437.0 486.0 C434.0 479.3 431.7 474.0 430.0 468.0 C428.3 462.0 427.5 458.0 427.0 450.0 C426.5 442.0 427.2 433.0 427.0 420.0 C426.8 407.0 434.7 376.7 426.0 372.0 C417.3 367.3 391.7 388.0 375.0 392.0 C358.3 396.0 332.7 392.0 326.0 396.0Z" fill="url(#gSkin)"/>
<g clip-path="url(#cSkin)">
<ellipse cx="370" cy="438" rx="36" ry="22" fill="url(#gSh)" opacity=".55"/>
<ellipse cx="418" cy="455" rx="16" ry="40" fill="url(#gSh)" opacity=".95"/>
<ellipse cx="392" cy="596" rx="40" ry="34" fill="url(#gSh)" opacity=".8"/>
<ellipse cx="300" cy="528" rx="60" ry="16" fill="url(#gSh)" opacity=".5"/>
<ellipse cx="380" cy="520" rx="60" ry="30" fill="url(#gHi)" opacity=".35"/>
<ellipse cx="462" cy="610" rx="16" ry="60" fill="url(#gHi)" opacity=".5" transform="rotate(-22 462 610)"/>
<ellipse cx="420" cy="725" rx="80" ry="12" fill="url(#gHi)" opacity=".4" transform="rotate(-8 420 725)"/>
<path d="M463.0 537.0 C465.2 542.0 472.2 557.8 476.0 567.0 C479.8 576.2 482.5 583.0 486.0 592.0 C489.5 601.0 493.7 612.2 497.0 621.0 C500.3 629.8 503.5 638.2 506.0 645.0 C508.5 651.8 510.0 656.2 512.0 662.0 C514.0 667.8 516.2 674.2 518.0 680.0 C519.8 685.8 522.0 691.7 523.0 697.0 C524.0 702.3 524.7 707.3 524.0 712.0 C523.3 716.7 521.8 721.7 519.0 725.0 C516.2 728.3 509.0 730.8 507.0 732.0" fill="none" stroke="#e7ad89" stroke-width="5" opacity=".55"/>
<path d="M459 681 C452 683 446 684 440 683" fill="none" stroke="#d9956c" stroke-width="1.500" opacity=".7"/>
</g>
<path d="M422.0 378.0 C424.8 373.3 435.0 369.0 440.0 370.0 C445.0 371.0 448.5 379.0 452.0 384.0 C455.5 389.0 458.5 394.5 461.0 400.0 C463.5 405.5 465.7 410.3 467.0 417.0 C468.3 423.7 468.7 432.8 469.0 440.0 C469.3 447.2 468.3 454.2 469.0 460.0 C469.7 465.8 471.7 469.7 473.0 475.0 C474.3 480.3 476.3 486.3 477.0 492.0 C477.7 497.7 477.8 503.5 477.0 509.0 C476.2 514.5 474.5 520.3 472.0 525.0 C469.5 529.7 464.7 537.3 462.0 537.0 C459.3 536.7 458.2 528.3 456.0 523.0 C453.8 517.7 451.7 511.0 449.0 505.0 C446.3 499.0 443.0 493.2 440.0 487.0 C437.0 480.8 433.3 473.8 431.0 468.0 C428.7 462.2 427.2 457.3 426.0 452.0 C424.8 446.7 424.2 441.7 424.0 436.0 C423.8 430.3 425.2 424.3 425.0 418.0 C424.8 411.7 423.5 404.7 423.0 398.0 C422.5 391.3 419.2 382.7 422.0 378.0Z" fill="url(#gPony)"/>
<g clip-path="url(#cPony)" fill="none" stroke-linecap="round">
<path d="M425.3 385.0 Q428.7 430.0 425.9 475.1" stroke="#414549" stroke-width="0.6" opacity="0.70"/>
<path d="M424.7 373.4 Q426.1 424.9 428.7 476.3" stroke="#3b3f43" stroke-width="0.7" opacity="0.59"/>
<path d="M427.7 383.5 Q435.9 440.4 432.9 497.8" stroke="#5f6367" stroke-width="1.2" opacity="0.62"/>
<path d="M426.3 378.2 Q429.0 452.6 429.0 527.1" stroke="#2c3034" stroke-width="1.0" opacity="0.65"/>
<path d="M428.5 373.2 Q431.7 428.8 429.8 484.4" stroke="#4e5256" stroke-width="0.8" opacity="0.73"/>
<path d="M428.7 387.9 Q431.9 453.4 432.4 518.9" stroke="#33373b" stroke-width="1.0" opacity="0.85"/>
<path d="M430.4 391.6 Q431.8 434.9 433.4 478.3" stroke="#3f4347" stroke-width="0.7" opacity="0.70"/>
<path d="M428.2 387.3 Q436.0 448.5 436.8 510.1" stroke="#5e6266" stroke-width="1.1" opacity="0.74"/>
<path d="M430.9 388.8 Q434.5 462.4 436.6 536.1" stroke="#464a4e" stroke-width="0.6" opacity="0.78"/>
<path d="M431.8 388.4 Q437.0 439.1 441.0 489.9" stroke="#42464a" stroke-width="0.6" opacity="0.68"/>
<path d="M430.4 373.2 Q437.6 448.3 436.8 523.8" stroke="#32363a" stroke-width="0.9" opacity="0.85"/>
<path d="M430.7 383.0 Q434.4 457.5 439.9 531.8" stroke="#616569" stroke-width="0.8" opacity="0.67"/>
<path d="M432.4 391.2 Q442.1 435.3 443.6 480.6" stroke="#393d41" stroke-width="0.8" opacity="0.69"/>
<path d="M433.9 372.1 Q438.9 435.6 441.0 499.3" stroke="#474b4f" stroke-width="1.3" opacity="0.78"/>
<path d="M434.2 385.5 Q439.0 429.7 444.3 473.8" stroke="#6b6f73" stroke-width="1.2" opacity="0.82"/>
<path d="M434.2 374.1 Q444.6 443.9 444.1 514.4" stroke="#373b3f" stroke-width="0.7" opacity="0.56"/>
<path d="M434.6 372.0 Q441.9 426.1 443.1 480.6" stroke="#3b3f43" stroke-width="0.6" opacity="0.85"/>
<path d="M436.3 377.0 Q445.5 435.3 444.8 494.3" stroke="#4e5256" stroke-width="1.2" opacity="0.90"/>
<path d="M436.3 373.7 Q445.9 425.0 447.9 477.2" stroke="#4f5357" stroke-width="1.2" opacity="0.56"/>
<path d="M435.1 382.6 Q449.1 430.4 451.8 480.3" stroke="#5e6266" stroke-width="1.0" opacity="0.89"/>
<path d="M439.0 377.2 Q445.0 436.5 451.4 495.7" stroke="#484c50" stroke-width="1.0" opacity="0.81"/>
<path d="M437.5 388.2 Q443.1 463.6 449.7 538.9" stroke="#777b7f" stroke-width="1.2" opacity="0.80"/>
<path d="M437.6 379.1 Q448.8 425.0 452.6 472.0" stroke="#43474b" stroke-width="0.8" opacity="0.78"/>
<path d="M441.1 390.7 Q450.2 464.7 453.2 539.2" stroke="#82868a" stroke-width="0.8" opacity="0.59"/>
<path d="M438.7 384.5 Q447.9 458.5 452.9 533.0" stroke="#7d8185" stroke-width="1.1" opacity="0.82"/>
<path d="M438.8 390.2 Q449.9 457.2 456.7 524.8" stroke="#797d81" stroke-width="0.7" opacity="0.82"/>
<path d="M440.4 391.4 Q448.0 444.8 458.7 497.7" stroke="#65696d" stroke-width="1.1" opacity="0.57"/>
<path d="M440.1 390.1 Q447.4 458.3 455.9 526.5" stroke="#565a5e" stroke-width="1.3" opacity="0.76"/>
<path d="M441.6 374.6 Q451.3 422.7 459.4 471.0" stroke="#8f9397" stroke-width="1.0" opacity="0.87"/>
<path d="M442.5 388.5 Q456.1 435.9 462.5 484.8" stroke="#62666a" stroke-width="0.8" opacity="0.73"/>
<path d="M442.4 374.6 Q453.9 453.9 460.8 533.7" stroke="#6b6f73" stroke-width="1.0" opacity="0.86"/>
<path d="M443.6 382.0 Q460.0 443.6 465.0 507.2" stroke="#797d81" stroke-width="0.9" opacity="0.57"/>
<path d="M442.5 375.4 Q455.5 439.0 465.4 503.1" stroke="#898d91" stroke-width="0.8" opacity="0.71"/>
<path d="M445.3 374.1 Q459.6 441.1 466.4 509.2" stroke="#6c7074" stroke-width="1.1" opacity="0.70"/>
<path d="M445.9 390.2 Q458.5 445.3 467.3 501.0" stroke="#868a8e" stroke-width="1.0" opacity="0.78"/>
<path d="M446.0 381.6 Q455.6 458.9 467.1 535.9" stroke="#8f9397" stroke-width="1.3" opacity="0.60"/>
<path d="M447.0 388.8 Q461.2 433.6 470.7 479.6" stroke="#6c7074" stroke-width="0.7" opacity="0.60"/>
<path d="M445.7 387.7 Q458.2 460.2 470.1 532.8" stroke="#717579" stroke-width="1.1" opacity="0.56"/>
<path d="M449.5 376.4 Q463.3 456.2 473.0 536.7" stroke="#83878b" stroke-width="1.3" opacity="0.83"/>
<path d="M447.2 382.3 Q462.4 437.3 470.9 493.7" stroke="#797d81" stroke-width="1.1" opacity="0.51"/>
<path d="M449.3 372.4 Q462.6 432.4 472.1 493.2" stroke="#989ca0" stroke-width="0.6" opacity="0.89"/>
<path d="M450.8 374.1 Q463.4 431.4 476.4 488.6" stroke="#74787c" stroke-width="0.8" opacity="0.55"/>
<path d="M450.0 388.4 Q462.2 438.6 477.1 488.1" stroke="#7e8286" stroke-width="1.0" opacity="0.78"/>
<path d="M449.2 385.8 Q459.7 443.1 473.1 499.8" stroke="#7c8084" stroke-width="1.0" opacity="0.82"/>
<path d="M449.8 373.3 Q467.6 451.3 479.0 530.4" stroke="#989ca0" stroke-width="1.0" opacity="0.87"/>
<path d="M451.1 382.5 Q468.0 433.5 475.8 486.7" stroke="#85898d" stroke-width="0.6" opacity="0.58"/>
</g>
<path d="M243.0 521.0 C240.3 521.7 237.0 526.7 234.0 530.0 C231.0 533.3 228.5 536.8 225.0 541.0 C221.5 545.2 216.0 550.3 213.0 555.0 C210.0 559.7 208.3 564.5 207.0 569.0 C205.7 573.5 205.0 577.8 205.0 582.0 C205.0 586.2 205.8 589.2 207.0 594.0 C208.2 598.8 210.2 605.2 212.0 611.0 C213.8 616.8 216.0 623.0 218.0 629.0 C220.0 635.0 222.2 641.0 224.0 647.0 C225.8 653.0 228.2 659.5 229.0 665.0 C229.8 670.5 228.5 673.7 229.0 680.0 C229.5 686.3 231.0 695.5 232.0 703.0 C233.0 710.5 235.3 718.3 235.0 725.0 C234.7 731.7 231.8 736.8 230.0 743.0 C228.2 749.2 215.7 758.8 224.0 762.0 C232.3 765.2 260.7 762.0 280.0 762.0 C299.3 762.0 330.7 763.7 340.0 762.0 C349.3 760.3 335.2 756.5 336.0 752.0 C336.8 747.5 341.3 740.7 345.0 735.0 C348.7 729.3 354.3 722.2 358.0 718.0 C361.7 713.8 364.3 714.3 367.0 710.0 C369.7 705.7 371.7 697.8 374.0 692.0 C376.3 686.2 378.8 680.0 381.0 675.0 C383.2 670.0 384.8 667.5 387.0 662.0 C389.2 656.5 391.8 648.0 394.0 642.0 C396.2 636.0 398.3 629.8 400.0 626.0 C401.7 622.2 405.0 621.5 404.0 619.0 C403.0 616.5 400.3 615.3 394.0 611.0 C387.7 606.7 375.3 600.0 366.0 593.0 C356.7 586.0 346.7 576.0 338.0 569.0 C329.3 562.0 322.7 556.3 314.0 551.0 C305.3 545.7 295.3 539.8 286.0 537.0 C276.7 534.2 264.0 535.8 258.0 534.0 C252.0 532.2 252.5 528.2 250.0 526.0 C247.5 523.8 245.7 520.3 243.0 521.0Z" fill="url(#gDress)"/>
<g clip-path="url(#cDress)">
<ellipse cx="276" cy="585" rx="42" ry="52" fill="url(#gHi)" opacity=".95" transform="rotate(12 276 585)"/>
<ellipse cx="250" cy="700" rx="26" ry="40" fill="url(#gHi)" opacity=".7"/>
<ellipse cx="330" cy="690" rx="40" ry="16" fill="url(#gHi)" opacity=".6"/>
<path d="M243 522 C262 528 292 532 318 549 C346 567 372 594 404 619 L400 630 C372 612 350 590 322 566 C298 548 270 540 240 540 Z" fill="url(#lace)" opacity=".95"/>
<path d="M318 549 C346 566 356 596 348 620 C340 644 316 652 290 650 C276 649 262 648 250 652" fill="none" stroke="url(#lace)" stroke-width="11" stroke-linecap="round"/>
<path d="M214 560 C222 548 232 538 246 532" fill="none" stroke="url(#lace)" stroke-width="9" stroke-linecap="round"/>
<path d="M292 700 C298 720 300 745 297 764" fill="none" stroke="url(#lace)" stroke-width="10"/>
<g fill="none" stroke="#efc6b0" stroke-width="1.400" opacity=".85"><path d="M228 678 C270 690 330 700 374 702"/><path d="M232 726 C262 736 300 742 338 744"/><path d="M352 602 C368 614 388 624 402 628"/><path d="M350 640 C362 650 376 656 388 660"/><path d="M222 600 C232 620 240 640 242 660"/><path d="M318 600 C326 612 332 626 334 640"/></g>
<path d="M222 764 L224 746 L231 741 L236 764 Z" fill="#dc9d78"/>
</g>
<clipPath id="cHand"><path d="M270.0 648.0 C272.2 646.0 278.7 647.5 283.0 648.0 C287.3 648.5 291.8 649.2 296.0 651.0 C300.2 652.8 304.0 655.2 308.0 659.0 C312.0 662.8 315.8 669.0 320.0 674.0 C324.2 679.0 329.5 685.0 333.0 689.0 C336.5 693.0 337.8 697.5 341.0 698.0 C344.2 698.5 348.5 693.5 352.0 692.0 C355.5 690.5 360.3 687.7 362.0 689.0 C363.7 690.3 363.0 696.0 362.0 700.0 C361.0 704.0 358.5 709.8 356.0 713.0 C353.5 716.2 348.0 715.3 347.0 719.0 C346.0 722.7 351.5 730.0 350.0 735.0 C348.5 740.0 343.0 747.0 338.0 749.0 C333.0 751.0 325.3 748.5 320.0 747.0 C314.7 745.5 310.0 743.5 306.0 740.0 C302.0 736.5 299.5 730.5 296.0 726.0 C292.5 721.5 288.2 715.5 285.0 713.0 C281.8 710.5 279.7 710.0 277.0 711.0 C274.3 712.0 271.5 719.2 269.0 719.0 C266.5 718.8 263.5 713.3 262.0 710.0 C260.5 706.7 259.5 703.0 260.0 699.0 C260.5 695.0 263.0 690.2 265.0 686.0 C267.0 681.8 271.2 678.3 272.0 674.0 C272.8 669.7 270.3 664.3 270.0 660.0 C269.7 655.7 267.8 650.0 270.0 648.0Z"/></clipPath>
<path d="M270.0 648.0 C272.2 646.0 278.7 647.5 283.0 648.0 C287.3 648.5 291.8 649.2 296.0 651.0 C300.2 652.8 304.0 655.2 308.0 659.0 C312.0 662.8 315.8 669.0 320.0 674.0 C324.2 679.0 329.5 685.0 333.0 689.0 C336.5 693.0 337.8 697.5 341.0 698.0 C344.2 698.5 348.5 693.5 352.0 692.0 C355.5 690.5 360.3 687.7 362.0 689.0 C363.7 690.3 363.0 696.0 362.0 700.0 C361.0 704.0 358.5 709.8 356.0 713.0 C353.5 716.2 348.0 715.3 347.0 719.0 C346.0 722.7 351.5 730.0 350.0 735.0 C348.5 740.0 343.0 747.0 338.0 749.0 C333.0 751.0 325.3 748.5 320.0 747.0 C314.7 745.5 310.0 743.5 306.0 740.0 C302.0 736.5 299.5 730.5 296.0 726.0 C292.5 721.5 288.2 715.5 285.0 713.0 C281.8 710.5 279.7 710.0 277.0 711.0 C274.3 712.0 271.5 719.2 269.0 719.0 C266.5 718.8 263.5 713.3 262.0 710.0 C260.5 706.7 259.5 703.0 260.0 699.0 C260.5 695.0 263.0 690.2 265.0 686.0 C267.0 681.8 271.2 678.3 272.0 674.0 C272.8 669.7 270.3 664.3 270.0 660.0 C269.7 655.7 267.8 650.0 270.0 648.0Z" fill="#f2cdb6"/>
<g clip-path="url(#cHand)">
<ellipse cx="312" cy="702" rx="30" ry="20" fill="url(#gSh)" opacity=".75" transform="rotate(25 312 702)"/>
<ellipse cx="268" cy="706" rx="9" ry="11" fill="#c98357" opacity=".75"/>
<ellipse cx="352" cy="704" rx="10" ry="8" fill="url(#gSh)" opacity=".7"/>
<path d="M272 652 C288 651 300 658 312 670" fill="none" stroke="#fbeadf" stroke-width="4" opacity=".85" stroke-linecap="round"/>
<path d="M266 684 C282 678 298 682 308 690" fill="none" stroke="#f9e3d6" stroke-width="4" opacity=".8" stroke-linecap="round"/>
<path d="M300 735 C320 738 340 738 352 734" fill="none" stroke="#f8e0d2" stroke-width="8" opacity=".7" stroke-linecap="round"/>
</g>
<g fill="none" stroke-linecap="round"><path d="M273 667 C288 664 302 670 314 682" stroke="#d58f66" stroke-width="1.400" opacity=".85"/><path d="M266 693 C282 688 296 690 308 698" stroke="#d08a60" stroke-width="1.300" opacity=".8"/><path d="M335 701 C345 700 353 696 360 690" stroke="#a8643f" stroke-width="1.500" opacity=".9"/><path d="M345 717 C350 716 354 713 357 710" stroke="#b06c45" stroke-width="1.500" opacity=".9"/><path d="M306 661 C312 668 318 676 324 684" stroke="#d79670" stroke-width="1.200" opacity=".7"/></g>
<g fill="none" stroke-linecap="round"><path d="M329 479 C343 493 370 488 392 478 C404 473 414 468 425 467" stroke="#bd7a52" stroke-width="10.500"/><path d="M329 479 C343 493 370 488 392 478 C404 473 414 468 425 467" stroke="#f1cdb3" stroke-width="7" stroke-dasharray="9 3.500"/><path d="M332 478 C345 489 370 484 392 475 C404 470 414 466 423 465" stroke="#fff4ea" stroke-width="2" stroke-dasharray="5 7.500" opacity=".95"/><path d="M333 484 C346 494 371 490 393 481" stroke="#c98a63" stroke-width="1.300" stroke-dasharray="6 6.500" opacity=".9"/></g>
<circle cx="337" cy="498" r="6.500" fill="#ecbd9f" stroke="#c5835b" stroke-width="1.400"/><circle cx="336" cy="497" r="3" fill="#f8dcc9"/>
<path d="M320.0 318.0 C313.0 322.7 318.3 333.2 318.0 340.0 C317.7 346.8 317.7 353.7 318.0 359.0 C318.3 364.3 319.2 367.7 320.0 372.0 C320.8 376.3 321.7 380.8 323.0 385.0 C324.3 389.2 326.0 393.3 328.0 397.0 C330.0 400.7 332.3 404.2 335.0 407.0 C337.7 409.8 340.5 412.0 344.0 414.0 C347.5 416.0 352.0 418.0 356.0 419.0 C360.0 420.0 364.0 420.5 368.0 420.0 C372.0 419.5 376.0 417.8 380.0 416.0 C384.0 414.2 388.3 411.8 392.0 409.0 C395.7 406.2 398.7 402.8 402.0 399.0 C405.3 395.2 409.5 390.8 412.0 386.0 C414.5 381.2 417.3 376.8 417.0 370.0 C416.7 363.2 413.7 353.7 410.0 345.0 C406.3 336.3 403.3 323.5 395.0 318.0 C386.7 312.5 372.5 312.0 360.0 312.0 C347.5 312.0 327.0 313.3 320.0 318.0Z" fill="url(#gFace)"/>
<g clip-path="url(#cFace)">
<ellipse cx="408" cy="392" rx="20" ry="36" fill="url(#gSh)" opacity=".95"/>
<ellipse cx="385" cy="420" rx="34" ry="10" fill="url(#gSh)" opacity=".5"/>
<rect x="316" y="318" width="84" height="9" fill="#e3a67e" opacity=".8"/>
<path d="M320 327 C340 324 372 324 396 328 L398 338 C380 332 340 331 320 336 Z" fill="#e9b08a" opacity=".75"/>
<path d="M350 340 C353 350 356 360 357 369 C355 372 352 372 350 370 C350 360 349 350 347 342 Z" fill="#efbe9c" opacity=".5"/>
<ellipse cx="344" cy="356" rx="5" ry="12" fill="url(#gHi)" opacity=".8"/>
<ellipse cx="378" cy="366" rx="18" ry="14" fill="url(#gHi)" opacity=".55"/>
<ellipse cx="352" cy="406" rx="18" ry="8" fill="url(#gHi)" opacity=".45"/>
<ellipse cx="351" cy="392" rx="15" ry="4.500" fill="#eab9a2" opacity=".7"/>
</g>
<path d="M325 337.500 C328 333.500 338 333 342 337.500 C338 341 329 341.500 325 337.500 Z" fill="#4a2c19"/>
<path d="M364 338.500 C371 334 385 334 393.500 338.500 C385 341.500 372 342 364 338.500 Z" fill="#4a2c19"/>
<circle cx="334" cy="337.300" r="2.200" fill="#9a6238"/><circle cx="379" cy="338" r="2.300" fill="#9a6238"/><circle cx="330.500" cy="337" r="1.100" fill="#f6e6da"/><circle cx="371.500" cy="338" r="1.300" fill="#f6e6da"/>
<path d="M323.500 336.500 C328 332 338 331.500 343.500 337 M362.500 337.500 C371 332.500 386 332.500 395 338" fill="none" stroke="#3e2414" stroke-width="1.300"/>
<path d="M339.500 366.500 C340.500 368.300 342.300 368.500 343.300 367.500 M347.800 366.300 C349.500 368 351.500 367.800 352.500 366.500" fill="none" stroke="#6f432d" stroke-width="1.700" stroke-linecap="round"/>
<path d="M334 388.500 C342 387 347 388.500 351 388.300 C356 388 361 387.500 367 389" fill="none" stroke="#a86b4e" stroke-width="1.300" stroke-linecap="round"/>
<path d="M316.0 318.0 C314.8 320.2 313.5 333.2 313.0 340.0 C312.5 346.8 313.0 350.5 313.0 359.0 C313.0 367.5 312.3 383.3 313.0 391.0 C313.7 398.7 315.5 400.5 317.0 405.0 C318.5 409.5 320.7 413.5 322.0 418.0 C323.3 422.5 324.7 427.2 325.0 432.0 C325.3 436.8 324.8 442.0 324.0 447.0 C323.2 452.0 322.2 457.0 320.0 462.0 C317.8 467.0 314.3 472.3 311.0 477.0 C307.7 481.7 304.7 484.5 300.0 490.0 C295.3 495.5 283.0 508.3 283.0 510.0 C283.0 511.7 294.5 502.8 300.0 500.0 C305.5 497.2 311.0 496.7 316.0 493.0 C321.0 489.3 326.3 483.2 330.0 478.0 C333.7 472.8 335.8 467.5 338.0 462.0 C340.2 456.5 341.8 450.7 343.0 445.0 C344.2 439.3 345.3 432.7 345.0 428.0 C344.7 423.3 343.2 420.7 341.0 417.0 C338.8 413.3 334.7 410.0 332.0 406.0 C329.3 402.0 326.8 398.2 325.0 393.0 C323.2 387.8 322.0 382.2 321.0 375.0 C320.0 367.8 319.2 358.0 319.0 350.0 C318.8 342.0 320.5 332.3 320.0 327.0 C319.5 321.7 317.2 315.8 316.0 318.0Z" fill="url(#gStr)"/>
<path d="M330 420 C336 436 334 456 326 472" fill="none" stroke="#e9edf0" stroke-width="3" opacity=".75" stroke-linecap="round"/>
<path d="M316 330 C312 360 314 395 322 420 C326 440 322 462 306 486" fill="none" stroke="#4f555a" stroke-width="1.300" opacity=".8"/>
<path d="M322 452 C310 458 300 466 292 470" fill="none" stroke="#6b7176" stroke-width="1" opacity=".8"/>
<path d="M411.0 382.0 C412.7 380.7 415.5 383.3 417.0 386.0 C418.5 388.7 420.0 393.3 420.0 398.0 C420.0 402.7 418.8 408.2 417.0 414.0 C415.2 419.8 411.3 426.7 409.0 433.0 C406.7 439.3 404.8 445.8 403.0 452.0 C401.2 458.2 400.0 464.3 398.0 470.0 C396.0 475.7 394.0 481.8 391.0 486.0 C388.0 490.2 384.3 492.8 380.0 495.0 C375.7 497.2 366.3 499.5 365.0 499.0 C363.7 498.5 369.7 494.5 372.0 492.0 C374.3 489.5 376.7 488.0 379.0 484.0 C381.3 480.0 383.8 474.2 386.0 468.0 C388.2 461.8 390.0 454.0 392.0 447.0 C394.0 440.0 396.2 432.5 398.0 426.0 C399.8 419.5 401.5 413.3 403.0 408.0 C404.5 402.7 405.7 398.3 407.0 394.0 C408.3 389.7 409.3 383.3 411.0 382.0Z" fill="url(#gStr)"/>
<path d="M413 380 C420 400 410 430 402 456 C398 472 390 488 370 497" fill="none" stroke="#59626b" stroke-width="1.300" opacity=".8"/>
<path d="M316.0 327.0 C314.5 325.5 317.2 318.0 318.0 314.0 C318.8 310.0 319.5 307.0 321.0 303.0 C322.5 299.0 324.5 294.7 327.0 290.0 C329.5 285.3 332.3 279.5 336.0 275.0 C339.7 270.5 344.0 266.3 349.0 263.0 C354.0 259.7 359.8 256.8 366.0 255.0 C372.2 253.2 378.5 252.0 386.0 252.0 C393.5 252.0 403.7 253.0 411.0 255.0 C418.3 257.0 424.3 260.0 430.0 264.0 C435.7 268.0 440.7 274.0 445.0 279.0 C449.3 284.0 453.0 288.5 456.0 294.0 C459.0 299.5 461.0 305.2 463.0 312.0 C465.0 318.8 467.3 329.2 468.0 335.0 C468.7 340.8 468.3 342.5 467.0 347.0 C465.7 351.5 462.7 357.7 460.0 362.0 C457.3 366.3 453.7 369.0 451.0 373.0 C448.3 377.0 446.5 381.8 444.0 386.0 C441.5 390.2 439.0 395.0 436.0 398.0 C433.0 401.0 428.5 404.5 426.0 404.0 C423.5 403.5 422.5 398.3 421.0 395.0 C419.5 391.7 418.2 387.2 417.0 384.0 C415.8 380.8 415.5 379.3 414.0 376.0 C412.5 372.7 410.5 369.7 408.0 364.0 C405.5 358.3 402.0 348.3 399.0 342.0 C396.0 335.7 393.2 329.2 390.0 326.0 C386.8 322.8 385.0 323.7 380.0 323.0 C375.0 322.3 366.7 322.3 360.0 322.0 C353.3 321.7 345.5 320.8 340.0 321.0 C334.5 321.2 331.0 322.0 327.0 323.0 C323.0 324.0 317.5 328.5 316.0 327.0Z" fill="url(#gHair)"/>
<g clip-path="url(#cHair)">
<rect x="300" y="240" width="180" height="180" fill="url(#gCrown)"/>
<rect x="300" y="240" width="180" height="180" fill="url(#gHairDk)"/>
<rect x="300" y="240" width="180" height="180" fill="url(#gBang)"/>
<g fill="none" stroke-linecap="round">
<path d="M373.6 256.3 Q336.9 284.7 313.2 324.5" stroke="#8b9197" stroke-width="0.9" opacity="0.46"/>
<path d="M373.8 258.4 Q336.9 284.1 314.3 323.1" stroke="#6e747a" stroke-width="1.3" opacity="0.50"/>
<path d="M372.9 260.7 Q338.0 286.6 317.9 325.2" stroke="#7f858b" stroke-width="1.2" opacity="0.89"/>
<path d="M374.6 259.1 Q339.1 287.3 317.3 327.2" stroke="#80868c" stroke-width="0.6" opacity="0.51"/>
<path d="M372.3 255.3 Q336.3 284.4 317.6 326.7" stroke="#62686e" stroke-width="1.3" opacity="0.75"/>
<path d="M373.0 257.7 Q339.2 285.3 319.7 324.2" stroke="#686e74" stroke-width="0.8" opacity="0.88"/>
<path d="M373.1 261.7 Q341.6 288.5 323.8 325.7" stroke="#757b81" stroke-width="0.6" opacity="0.62"/>
<path d="M373.3 258.0 Q341.7 286.9 323.2 325.5" stroke="#595f65" stroke-width="0.7" opacity="0.63"/>
<path d="M374.4 255.9 Q341.4 284.0 322.7 323.1" stroke="#8c9298" stroke-width="1.2" opacity="0.75"/>
<path d="M375.3 256.6 Q344.9 287.8 326.8 327.4" stroke="#afb5bb" stroke-width="1.2" opacity="0.74"/>
<path d="M378.8 259.0 Q344.3 287.0 325.4 327.2" stroke="#989ea4" stroke-width="0.7" opacity="0.69"/>
<path d="M378.7 260.6 Q345.6 287.8 328.6 327.2" stroke="#8a9096" stroke-width="1.1" opacity="0.76"/>
<path d="M375.1 256.9 Q344.0 284.5 328.8 323.2" stroke="#5e646a" stroke-width="1.0" opacity="0.73"/>
<path d="M377.7 254.0 Q346.9 285.3 331.7 326.4" stroke="#9ba1a7" stroke-width="1.0" opacity="0.69"/>
<path d="M379.6 256.0 Q350.5 285.6 333.1 323.3" stroke="#5a6066" stroke-width="1.2" opacity="0.54"/>
<path d="M378.6 257.1 Q349.3 287.9 334.8 327.9" stroke="#7d8389" stroke-width="1.2" opacity="0.73"/>
<path d="M376.9 256.0 Q350.3 286.0 335.7 323.4" stroke="#949aa0" stroke-width="1.1" opacity="0.46"/>
<path d="M380.5 259.5 Q352.0 288.0 334.7 324.3" stroke="#8d9399" stroke-width="1.0" opacity="0.66"/>
<path d="M382.3 255.6 Q352.2 284.5 337.7 323.6" stroke="#a8aeb4" stroke-width="0.6" opacity="0.66"/>
<path d="M380.1 256.1 Q352.2 287.5 340.4 327.8" stroke="#62686e" stroke-width="0.8" opacity="0.71"/>
<path d="M383.5 255.1 Q355.1 286.4 339.0 325.6" stroke="#989ea4" stroke-width="1.3" opacity="0.77"/>
<path d="M381.2 254.2 Q354.7 287.4 340.7 327.5" stroke="#4e545a" stroke-width="1.0" opacity="0.59"/>
<path d="M380.6 260.7 Q354.3 288.6 341.6 324.7" stroke="#4d5359" stroke-width="1.3" opacity="0.50"/>
<path d="M384.5 256.3 Q359.7 288.3 346.1 326.6" stroke="#6d7379" stroke-width="1.4" opacity="0.72"/>
<path d="M381.2 254.4 Q356.0 286.1 345.2 325.1" stroke="#545a60" stroke-width="0.8" opacity="0.87"/>
<path d="M383.1 255.5 Q357.1 285.9 346.0 324.3" stroke="#6c7278" stroke-width="1.3" opacity="0.82"/>
<path d="M386.1 258.4 Q363.4 290.8 348.9 327.6" stroke="#8a9096" stroke-width="1.2" opacity="0.65"/>
<path d="M382.6 254.4 Q362.2 288.3 350.7 326.2" stroke="#9ca2a8" stroke-width="1.0" opacity="0.60"/>
<path d="M387.2 256.1 Q363.9 288.9 350.2 326.7" stroke="#83898f" stroke-width="1.0" opacity="0.63"/>
<path d="M383.0 261.2 Q362.6 290.3 351.0 323.8" stroke="#747a80" stroke-width="1.3" opacity="0.90"/>
<path d="M383.4 254.7 Q364.5 287.5 353.5 323.7" stroke="#656b71" stroke-width="0.8" opacity="0.57"/>
<path d="M387.2 257.3 Q365.8 289.9 355.3 327.4" stroke="#6b7177" stroke-width="0.9" opacity="0.60"/>
<path d="M388.9 255.0 Q366.2 287.0 354.6 324.4" stroke="#72787e" stroke-width="1.3" opacity="0.55"/>
<path d="M385.9 257.6 Q365.0 288.1 356.7 324.2" stroke="#9aa0a6" stroke-width="1.3" opacity="0.46"/>
<path d="M389.4 257.8 Q370.1 290.7 357.1 326.5" stroke="#787e84" stroke-width="0.9" opacity="0.87"/>
<path d="M390.3 256.0 Q372.3 290.2 361.6 327.3" stroke="#4d5359" stroke-width="1.0" opacity="0.76"/>
<path d="M388.7 260.1 Q371.1 291.5 363.4 326.6" stroke="#6b7177" stroke-width="0.6" opacity="0.80"/>
<path d="M389.2 256.4 Q371.8 290.6 361.8 327.6" stroke="#4d5359" stroke-width="1.1" opacity="0.76"/>
<path d="M388.9 258.7 Q372.3 289.6 362.7 323.4" stroke="#63696f" stroke-width="1.1" opacity="0.45"/>
<path d="M391.9 259.2 Q374.1 290.5 364.8 325.3" stroke="#8f959b" stroke-width="0.8" opacity="0.56"/>
<path d="M388.5 254.2 Q373.5 289.0 368.7 326.5" stroke="#6c7278" stroke-width="0.9" opacity="0.57"/>
<path d="M388.4 254.3 Q374.7 289.9 368.9 327.6" stroke="#5d6369" stroke-width="1.1" opacity="0.54"/>
<path d="M390.5 255.6 Q377.2 290.2 370.7 326.7" stroke="#959ba1" stroke-width="1.3" opacity="0.55"/>
<path d="M389.7 261.6 Q376.9 293.4 369.7 326.8" stroke="#696f75" stroke-width="0.8" opacity="0.64"/>
<path d="M389.3 257.1 Q375.3 291.1 372.8 327.7" stroke="#4f555b" stroke-width="0.7" opacity="0.47"/>
<path d="M394.2 261.1 Q377.4 291.1 371.7 325.0" stroke="#7d8389" stroke-width="1.3" opacity="0.60"/>
<path d="M393.7 254.3 Q380.5 290.1 373.6 327.7" stroke="#767c82" stroke-width="0.9" opacity="0.60"/>
<path d="M391.4 256.8 Q381.0 289.4 374.8 323.0" stroke="#90969c" stroke-width="1.4" opacity="0.54"/>
<path d="M395.1 257.5 Q382.7 291.4 376.9 327.1" stroke="#3d4349" stroke-width="0.9" opacity="0.86"/>
<path d="M396.0 254.2 Q382.3 288.4 377.6 324.8" stroke="#5d6369" stroke-width="1.2" opacity="0.47"/>
<path d="M396.6 256.1 Q382.8 288.4 378.2 323.3" stroke="#7b8187" stroke-width="0.9" opacity="0.57"/>
<path d="M393.0 259.7 Q386.0 292.6 383.3 326.1" stroke="#53595f" stroke-width="0.6" opacity="0.79"/>
<path d="M397.6 254.2 Q388.2 289.7 384.4 326.2" stroke="#4b5157" stroke-width="1.4" opacity="0.88"/>
<path d="M394.9 257.9 Q387.8 290.8 383.6 324.3" stroke="#898f95" stroke-width="1.2" opacity="0.78"/>
<path d="M396.4 256.6 Q389.5 291.5 386.7 326.9" stroke="#51575d" stroke-width="1.2" opacity="0.49"/>
<path d="M394.7 254.5 Q387.4 290.3 385.5 326.8" stroke="#373d43" stroke-width="0.9" opacity="0.89"/>
<path d="M395.3 254.7 Q390.0 291.1 389.6 327.9" stroke="#3b4147" stroke-width="1.2" opacity="0.65"/>
<path d="M397.8 259.4 Q389.4 291.7 388.3 325.1" stroke="#757b81" stroke-width="1.1" opacity="0.50"/>
<path d="M398.0 257.0 Q394.1 290.6 392.0 324.5" stroke="#747a80" stroke-width="0.8" opacity="0.56"/>
<path d="M398.5 256.6 Q390.6 291.6 390.6 327.4" stroke="#545a60" stroke-width="1.0" opacity="0.55"/>
<path d="M414.6 259.5 Q411.8 306.6 400.9 352.4" stroke="#6d7073" stroke-width="1.4" opacity="0.86"/>
<path d="M393.1 255.9 Q400.5 305.4 396.5 355.2" stroke="#a6a9ac" stroke-width="1.4" opacity="0.59"/>
<path d="M416.3 257.5 Q415.8 314.1 398.2 367.9" stroke="#a3a6a9" stroke-width="1.1" opacity="0.71"/>
<path d="M398.1 256.7 Q404.1 307.1 398.3 357.4" stroke="#535659" stroke-width="1.2" opacity="0.50"/>
<path d="M392.3 256.3 Q405.8 306.3 402.3 358.1" stroke="#5a5d60" stroke-width="1.3" opacity="0.67"/>
<path d="M393.8 254.0 Q406.9 309.5 401.4 366.3" stroke="#7f8285" stroke-width="0.7" opacity="0.75"/>
<path d="M403.5 255.8 Q409.3 315.7 401.7 375.4" stroke="#5a5d60" stroke-width="0.9" opacity="0.61"/>
<path d="M416.2 263.0 Q418.5 313.3 402.8 361.3" stroke="#898c8f" stroke-width="0.6" opacity="0.85"/>
<path d="M403.9 261.2 Q413.4 318.6 403.9 376.0" stroke="#6a6d70" stroke-width="0.6" opacity="0.68"/>
<path d="M409.9 262.1 Q414.0 317.4 402.8 371.7" stroke="#606366" stroke-width="0.7" opacity="0.54"/>
<path d="M406.6 262.3 Q410.2 316.3 403.7 370.1" stroke="#929598" stroke-width="0.8" opacity="0.46"/>
<path d="M418.4 262.8 Q421.2 313.6 406.8 362.3" stroke="#9fa2a5" stroke-width="1.4" opacity="0.71"/>
<path d="M415.1 254.6 Q418.3 311.0 409.4 366.7" stroke="#636669" stroke-width="1.3" opacity="0.49"/>
<path d="M398.1 257.0 Q413.2 313.1 408.6 370.9" stroke="#434649" stroke-width="1.3" opacity="0.85"/>
<path d="M393.2 258.6 Q412.7 310.0 410.9 365.0" stroke="#95989b" stroke-width="1.1" opacity="0.68"/>
<path d="M409.6 256.1 Q417.3 316.5 409.7 376.9" stroke="#65686b" stroke-width="1.0" opacity="0.62"/>
<path d="M392.7 259.2 Q408.9 313.9 410.9 370.9" stroke="#8c8f92" stroke-width="1.0" opacity="0.49"/>
<path d="M405.3 254.1 Q416.8 314.6 409.5 375.8" stroke="#3f4245" stroke-width="1.1" opacity="0.42"/>
<path d="M409.8 253.8 Q423.8 318.4 414.0 383.8" stroke="#6f7275" stroke-width="1.1" opacity="0.59"/>
<path d="M418.6 254.4 Q424.6 321.9 415.5 389.1" stroke="#888b8e" stroke-width="0.8" opacity="0.89"/>
<path d="M405.8 262.6 Q418.2 317.3 416.7 373.5" stroke="#8e9194" stroke-width="0.7" opacity="0.58"/>
<path d="M413.2 254.6 Q427.2 315.2 417.4 376.7" stroke="#919497" stroke-width="1.1" opacity="0.86"/>
<path d="M397.8 255.6 Q418.6 315.4 415.8 378.5" stroke="#383b3e" stroke-width="0.7" opacity="0.87"/>
<path d="M411.0 262.0 Q422.8 325.1 414.6 388.8" stroke="#404346" stroke-width="1.2" opacity="0.58"/>
<path d="M416.4 258.6 Q424.5 325.1 417.9 391.8" stroke="#3f4245" stroke-width="1.2" opacity="0.60"/>
<path d="M414.3 255.6 Q426.6 320.7 421.2 386.7" stroke="#5c5f62" stroke-width="1.0" opacity="0.49"/>
<path d="M412.8 253.5 Q424.6 316.8 421.0 381.2" stroke="#7c7f82" stroke-width="1.1" opacity="0.73"/>
<path d="M400.8 253.0 Q420.1 315.1 417.0 380.1" stroke="#797c7f" stroke-width="1.1" opacity="0.85"/>
<path d="M395.7 255.3 Q420.3 314.5 421.6 378.5" stroke="#333639" stroke-width="0.7" opacity="0.58"/>
<path d="M398.3 258.8 Q421.3 318.9 422.0 383.2" stroke="#7a7d80" stroke-width="0.7" opacity="0.87"/>
<path d="M398.8 254.5 Q418.9 322.2 419.8 392.8" stroke="#96999c" stroke-width="1.0" opacity="0.53"/>
<path d="M392.3 259.4 Q419.5 321.0 423.5 388.1" stroke="#7c7f82" stroke-width="1.4" opacity="0.77"/>
<path d="M399.0 262.0 Q423.2 325.1 421.2 392.7" stroke="#616467" stroke-width="0.7" opacity="0.79"/>
<path d="M392.3 258.5 Q420.7 319.2 427.3 385.9" stroke="#494c4f" stroke-width="1.1" opacity="0.72"/>
<path d="M414.8 254.7 Q429.3 321.7 424.4 390.0" stroke="#373a3d" stroke-width="1.3" opacity="0.76"/>
<path d="M392.2 261.4 Q422.1 324.6 427.8 394.3" stroke="#878a8d" stroke-width="0.8" opacity="0.45"/>
<path d="M398.5 253.4 Q422.5 325.3 426.1 401.0" stroke="#818487" stroke-width="1.2" opacity="0.53"/>
<path d="M407.5 257.4 Q430.2 325.6 429.7 397.4" stroke="#505356" stroke-width="1.5" opacity="0.51"/>
<path d="M416.6 253.2 Q432.1 322.1 427.3 392.7" stroke="#86898c" stroke-width="1.3" opacity="0.56"/>
<path d="M416.6 256.3 Q434.1 330.8 428.0 407.1" stroke="#797c7f" stroke-width="1.2" opacity="0.89"/>
<path d="M405.1 261.4 Q430.0 332.1 431.5 407.1" stroke="#636669" stroke-width="1.1" opacity="0.55"/>
<path d="M397.9 259.2 Q429.2 330.0 428.6 407.3" stroke="#414447" stroke-width="0.7" opacity="0.86"/>
<path d="M401.7 254.4 Q427.9 319.1 429.1 388.9" stroke="#808386" stroke-width="1.2" opacity="0.77"/>
<path d="M393.8 258.9 Q423.9 328.3 432.0 403.4" stroke="#8e9194" stroke-width="0.7" opacity="0.83"/>
<path d="M417.6 262.4 Q441.0 324.6 431.2 390.2" stroke="#3d4043" stroke-width="1.4" opacity="0.81"/>
<path d="M409.8 261.3 Q438.7 322.9 435.2 390.9" stroke="#3b3e41" stroke-width="1.3" opacity="0.50"/>
<path d="M400.9 257.2 Q429.3 320.2 432.3 389.3" stroke="#505356" stroke-width="0.9" opacity="0.56"/>
<path d="M419.0 258.0 Q443.4 324.7 438.1 395.5" stroke="#333639" stroke-width="1.0" opacity="0.79"/>
<path d="M401.7 260.0 Q435.8 318.7 437.1 386.5" stroke="#939699" stroke-width="1.3" opacity="0.49"/>
<path d="M392.0 255.0 Q429.8 323.3 439.2 400.7" stroke="#303336" stroke-width="1.0" opacity="0.80"/>
<path d="M397.2 257.9 Q429.2 323.9 437.5 396.8" stroke="#4d5053" stroke-width="0.9" opacity="0.51"/>
<path d="M411.6 258.0 Q437.5 322.4 436.9 391.9" stroke="#383b3e" stroke-width="1.2" opacity="0.79"/>
<path d="M409.6 256.6 Q441.9 317.3 439.5 386.1" stroke="#95989b" stroke-width="1.4" opacity="0.41"/>
<path d="M397.8 255.6 Q433.0 317.1 443.3 387.2" stroke="#5a5d60" stroke-width="0.8" opacity="0.63"/>
<path d="M406.9 260.5 Q441.2 320.3 443.2 389.1" stroke="#575a5d" stroke-width="0.7" opacity="0.82"/>
<path d="M410.5 260.4 Q440.5 318.6 440.5 384.0" stroke="#878a8d" stroke-width="0.7" opacity="0.63"/>
<path d="M416.8 255.4 Q442.9 315.1 441.5 380.3" stroke="#7f8285" stroke-width="0.7" opacity="0.48"/>
<path d="M398.9 256.3 Q438.5 310.0 444.2 376.5" stroke="#54575a" stroke-width="1.5" opacity="0.76"/>
<path d="M394.9 262.6 Q432.3 315.8 442.5 379.9" stroke="#9fa2a5" stroke-width="1.3" opacity="0.62"/>
<path d="M397.5 259.4 Q438.5 310.3 443.4 375.4" stroke="#5b5e61" stroke-width="1.0" opacity="0.80"/>
<path d="M411.4 258.0 Q444.9 314.2 447.3 379.5" stroke="#3e4144" stroke-width="1.0" opacity="0.77"/>
<path d="M417.4 257.3 Q450.7 316.5 447.8 384.3" stroke="#5e6164" stroke-width="1.2" opacity="0.84"/>
<path d="M413.7 260.0 Q448.7 315.9 450.3 381.9" stroke="#777a7d" stroke-width="0.9" opacity="0.71"/>
<path d="M394.7 257.2 Q439.9 311.7 450.7 381.6" stroke="#76797c" stroke-width="1.0" opacity="0.63"/>
<path d="M409.4 257.1 Q445.9 315.9 450.8 384.9" stroke="#424548" stroke-width="1.3" opacity="0.59"/>
<path d="M405.7 262.7 Q441.8 313.9 447.8 376.2" stroke="#404346" stroke-width="1.4" opacity="0.66"/>
<path d="M394.8 258.7 Q438.6 311.4 451.6 378.7" stroke="#686b6e" stroke-width="1.3" opacity="0.66"/>
<path d="M403.5 262.5 Q442.2 313.5 450.5 377.0" stroke="#5a5d60" stroke-width="0.7" opacity="0.89"/>
<path d="M402.0 253.6 Q444.0 304.6 451.7 370.4" stroke="#2e3134" stroke-width="1.0" opacity="0.75"/>
<path d="M401.9 255.7 Q443.8 308.9 452.2 376.2" stroke="#999c9f" stroke-width="0.8" opacity="0.80"/>
<path d="M403.0 255.1 Q444.1 308.8 452.4 375.9" stroke="#898c8f" stroke-width="1.0" opacity="0.68"/>
<path d="M398.3 262.6 Q441.4 309.7 454.6 372.2" stroke="#8a8d90" stroke-width="1.0" opacity="0.55"/>
<path d="M407.4 254.3 Q451.3 301.4 458.2 365.5" stroke="#8e9194" stroke-width="0.9" opacity="0.53"/>
<path d="M403.9 254.9 Q448.0 305.2 454.1 371.9" stroke="#4c4f52" stroke-width="0.9" opacity="0.64"/>
<path d="M404.0 259.4 Q446.6 303.5 458.8 363.7" stroke="#96999c" stroke-width="0.7" opacity="0.81"/>
<path d="M417.4 260.8 Q458.1 309.0 456.5 372.1" stroke="#74777a" stroke-width="0.6" opacity="0.88"/>
<path d="M410.4 255.5 Q450.1 298.9 457.1 357.3" stroke="#46494c" stroke-width="0.9" opacity="0.48"/>
<path d="M417.3 260.9 Q454.8 309.8 458.3 371.3" stroke="#717477" stroke-width="1.2" opacity="0.85"/>
<path d="M414.1 261.4 Q453.7 306.5 459.3 366.3" stroke="#686b6e" stroke-width="1.0" opacity="0.84"/>
<path d="M407.5 255.6 Q454.1 294.2 460.3 354.3" stroke="#64676a" stroke-width="1.0" opacity="0.47"/>
<path d="M405.8 258.0 Q450.6 304.4 463.0 367.8" stroke="#2c2f32" stroke-width="1.0" opacity="0.68"/>
<path d="M410.6 261.4 Q457.0 298.7 462.8 357.9" stroke="#999c9f" stroke-width="1.2" opacity="0.72"/>
<path d="M392.8 259.1 Q443.9 303.2 465.4 367.2" stroke="#515457" stroke-width="1.1" opacity="0.64"/>
<path d="M417.1 253.3 Q458.8 298.8 466.5 360.0" stroke="#515457" stroke-width="0.9" opacity="0.64"/>
<path d="M406.7 260.7 Q453.2 297.2 464.2 355.2" stroke="#5b5e61" stroke-width="1.3" opacity="0.55"/>
<path d="M415.2 257.0 Q457.1 295.1 466.8 351.0" stroke="#64676a" stroke-width="1.2" opacity="0.80"/>
<path d="M401.3 256.2 Q450.4 295.5 466.4 356.3" stroke="#737679" stroke-width="0.6" opacity="0.76"/>
<path d="M416.8 258.5 Q461.9 292.9 465.7 349.6" stroke="#2b2e31" stroke-width="1.4" opacity="0.70"/>
<path d="M410.4 260.9 Q458.7 296.4 471.6 354.8" stroke="#717477" stroke-width="1.2" opacity="0.70"/>
<path d="M411.1 255.1 Q461.7 290.0 471.0 350.8" stroke="#818487" stroke-width="0.8" opacity="0.42"/>
</g>
<path d="M316 324 C340 320 365 321 390 325" fill="none" stroke="#7b8a98" stroke-width="3" opacity=".7"/>
</g>
</g>
</defs>
<use href="#fig"/>
</svg>
<!-- ===== left toolbar ===== -->
<svg style="left:0;top:66px" width="46" height="640" viewBox="0 66 46 640">
 <!-- collapse chevrons -->
 <path d="M9.500 70.500 l2.500 2.500 l-2.500 2.500 M13.500 70.500 l2.500 2.500 l-2.500 2.500" fill="none" stroke="#d0d0d0" stroke-width="1.200"/>
 <!-- grip -->
 <g fill="#464646"><rect x="15" y="82" width="1" height="5"/><rect x="17" y="82" width="1" height="5"/><rect x="19" y="82" width="1" height="5"/><rect x="21" y="82" width="1" height="5"/><rect x="23" y="82" width="1" height="5"/><rect x="25" y="82" width="1" height="5"/><rect x="27" y="82" width="1" height="5"/><rect x="29" y="82" width="1" height="5"/><rect x="31" y="82" width="1" height="5"/></g>
 <!-- selected tool box -->
 <rect x="8.500" y="96.500" width="31" height="23" fill="#383838" stroke="#5c5c5c"/>
 <!-- move -->
 <path transform="translate(22.500 108.500) scale(.95)" d="M0 -8 l3.200 3.600 h-2.300 v3.500 h3.500 v-2.300 l3.600 3.200 l-3.600 3.200 v-2.300 h-3.500 v3.500 h2.300 l-3.200 3.600 l-3.200 -3.600 h2.300 v-3.500 h-3.500 v2.300 l-3.600 -3.200 l3.600 -3.200 v2.300 h3.500 v-3.500 h-2.300 z" fill="#e4e4e4"/>
 <g fill="none" stroke="#dcdcdc" stroke-width="1.300">
  <!-- artboard -->
  <path d="M17 125 v4 M13 129 h4"/><path d="M17.500 130.500 h9 l3 3 v7.500 h-12 z"/>
  <!-- marquee -->
  <rect x="15.500" y="153.500" width="15" height="12" stroke-dasharray="3.400 2.200"/>
  <!-- lasso -->
  <ellipse cx="24" cy="184.500" rx="7.500" ry="5" transform="rotate(-15 24 184.500)"/><path d="M18 188.500 c-1.500 1, -1 3, 1 2.500 c2 -.500, 2 2, 1 3.500"/>
  <!-- crop -->
  <path d="M18 229.500 v12.500 h14 M13.500 233.500 h2.500 M20.500 233.500 h7.500 v12.500" stroke-width="1.900"/>
  <!-- eraser outline bottom -->
  <path d="M17 322.500 h14"/>
  <!-- pen -->
  <path d="M17 401 l2 -8 l6 -4.500 l5 4.500 l-4 6.500 z M17 401 l5.500 -5.500"/><circle cx="23.500" cy="394.500" r="1.200"/>
  <!-- rect, rrect, ellipse -->
  <rect x="15.500" y="439.500" width="15" height="12" fill="#6e6e6e"/>
  <rect x="15.500" y="465.500" width="15" height="12" rx="3.500" fill="#6e6e6e"/>
  <ellipse cx="23" cy="497.500" rx="7.500" ry="6" fill="#6e6e6e"/>
  <!-- custom shape -->
  <path d="M16 519 c2 -3, 5 -1, 6 0 c1.500 -2, 4 -2.500, 4 0 c2 -.500, 5 1, 3 3 c-2 1.500, -3 2, -2 5 c.500 2, -3 2.500, -4 0 c-1 -2, -3 -.500, -4.500 .500 c-2 1, -4 -.500, -2.500 -2.500 c1.500 -2, 0 -3, -1 -4 c-.500 -1, 0 -2, 1 -2 z" fill="#6e6e6e"/>
  <!-- zoom -->
  <circle cx="21.500" cy="574" r="5.500"/><path d="M25.500 578.500 l5 5" stroke-width="2"/>
  <!-- screen mode -->
  <rect x="14.500" y="682.500" width="10" height="8"/><rect x="19.500" y="678.500" width="11" height="8" fill="#535353"/>
 </g>
 <g fill="#dcdcdc">
  <!-- wand -->
  <path d="M15 219 l9 -9 l2 2 l-9 9 z"/><path d="M28 204 l.700 1.800 l1.800 .700 l-1.800 .700 l-.700 1.800 l-.700 -1.800 l-1.800 -.700 l1.800 -.700 z M22 204 l.500 1.200 l1.200 .500 l-1.200 .500 l-.500 1.200 l-.500 -1.200 l-1.200 -.500 l1.200 -.500 z M30 211 l.500 1.200 l1.200 .500 l-1.200 .500 l-.500 1.200 l-.500 -1.200 l-1.200 -.500 l1.200 -.500 z"/>
  <!-- eyedropper -->
  <path d="M29.500 255.500 c1.500 1.500, 1.500 3, 0 4.500 l-2 2 l1 1 l-1.500 1.500 l-1 -1 l-6 6 c-1 1, -2.500 1, -3 2 l-1.500 -.500 l-.500 -1.500 c1 -.500, 1 -2, 2 -3 l6 -6 l-1 -1 l1.500 -1.500 l1 1 l2 -2 c1.500 -1.500, 3 -1.500, 3 -.500 z"/>
  <!-- brush -->
  <path d="M30.500 281.500 c1 .500, .500 2, -.500 3 l-7.500 8 l-2 -2 l8 -8 c.800 -.800, 1.500 -1.200, 2 -1 z M19.500 291.500 l2 2 c-.500 3, -3.500 4, -6.500 3.500 c1.500 -1, 2 -2, 2 -3.500 c.300 -1.500, 1.500 -2, 2.500 -2 z"/>
  <!-- eraser -->
  <path d="M24 309 l6.500 4 l-6 8 h-5.500 l-2.500 -2 z"/>
  <path d="M19.500 320 l-1.500 -1.200 l3.500 -4.500 l4 2.500 l-2.500 3.200 z" fill="#535353"/>
  <!-- gradient -->
  <rect x="15" y="335" width="16" height="13" fill="url(#tg)" stroke="#dcdcdc" stroke-width="1.200"/>
  <!-- T -->
  <path d="M16 361 h14 v4 h-1.500 l-.500 -2 h-3.500 v10.500 l2 .500 v1.200 h-7 v-1.200 l2 -.500 v-10.500 h-3.500 l-.500 2 h-1.500 z"/>
  <!-- path select arrow -->
  <path d="M18.500 411 l10.500 10 h-5 l2.500 5.500 l-2 1 l-2.500 -5.500 l-3.500 3.500 z"/>
  <!-- hand -->
  <path d="M18 552 c-1 -1.500, -2.500 -3, -1 -4 c1 -.500, 2 .500, 3 2 l0 -6.500 c0 -1.500, 2 -1.500, 2 0 l.200 4 l0 -5.500 c0 -1.500, 2 -1.500, 2 0 l0 5.500 l.500 -4.500 c.200 -1.500, 2 -1.300, 2 .200 l-.200 5 l1 -3 c.500 -1.300, 2 -.800, 1.800 .500 l-.800 6.500 c-.300 3, -1.500 4.500, -2.500 5.500 h-5.500 c-1 -1.500, -1.500 -3.500, -2.500 -5.700 z"/>
  <!-- dots -->
  <circle cx="17" cy="602" r="1.700"/><circle cx="23" cy="602" r="1.700"/><circle cx="29" cy="602" r="1.700"/>
  <!-- flyout triangles -->
  <g fill="#b0b0b0">
   <path d="M36 219 v3 h-3 z"/><path d="M36 245 v3 h-3 z"/><path d="M36 271 v3 h-3 z"/><path d="M36 297 v3 h-3 z"/><path d="M36 375 v3 h-3 z"/><path d="M36 401 v3 h-3 z"/><path d="M36 427 v3 h-3 z"/><path d="M36 609 v3 h-3 z"/><path d="M36 691 v3 h-3 z"/>
  </g>
  <!-- default colors mini -->
  <rect x="8" y="621" width="7" height="7" fill="#d8d8d8"/><rect x="11.500" y="624.500" width="6" height="6" fill="#111" stroke="#d8d8d8" stroke-width="1"/>
 </g>
 <!-- swap arrows -->
 <path d="M27 623.500 h5.500 v6 M33.500 625 h-5.500 M29.500 621.500 l-2.500 2 l2.500 2 M30.500 627.500 l2 2.500 l2 -2.500" fill="none" stroke="#dcdcdc" stroke-width="1.200"/>
 <!-- fg / bg swatches -->
 <rect x="19" y="647" width="18" height="18" fill="#ffffff"/>
 <rect x="9.500" y="637.500" width="18" height="18" fill="#000" stroke="#e6e6e6" stroke-width="1"/>
 <defs><linearGradient id="tg" x1="0" y1="0" x2="1" y2="0"><stop offset="0" stop-color="#303030"/><stop offset="1" stop-color="#dadada"/></linearGradient></defs>
</svg>
<!-- ===== right column: navigator ===== -->
<div class="a" style="left:929px;top:67px;width:267px;height:12px;background:#424242"></div>
<svg style="left:1182px;top:70px" width="9" height="6" viewBox="0 0 9 6"><path d="M1 0.500 l2.500 2.500 l-2.500 2.500 M5 0.500 l2.500 2.500 l-2.500 2.500" fill="none" stroke="#d0d0d0" stroke-width="1.200"/></svg>
<div class="a" style="left:929px;top:79px;width:267px;height:28px;background:#424242"></div>
<div class="a" style="left:929px;top:79px;width:58px;height:28px;background:#535353"></div>
<div class="a" style="left:987px;top:79px;width:44px;height:27px;background:#424242;border-left:1px solid #383838;border-right:1px solid #383838"></div>
<div class="t" style="left:939px;top:85px;color:#f0f0f0;font-size:12px">导航器</div>
<div class="t" style="left:995px;top:85px;color:#a8a8a8;font-size:12px">信息</div>
<svg style="left:1179px;top:89px" width="10" height="8" viewBox="0 0 10 8"><path d="M0 .500 h10 M0 3 h10 M0 5.500 h10 M0 8 h10" stroke="#c4c4c4" stroke-width="1"/></svg>
<div class="a" style="left:929px;top:107px;width:267px;height:112px;background:#535353"></div>
<!-- navigator preview -->
<div class="a" id="navprev" style="left:986px;top:112px;width:153px;height:103px;background:#fff;border:2px solid #e2453f;overflow:hidden"></div>
<!-- zoom row -->
<div class="a" style="left:929px;top:219px;width:267px;height:1px;background:#464646"></div>
<div class="a" style="left:930px;top:224px;width:56px;height:14px;background:#454545"></div>
<div class="t" style="left:932px;top:224.500px;color:#e8e8e8;font-size:10px;letter-spacing:-.1px">66.67%</div>
<svg style="left:990px;top:222px" width="190" height="22" viewBox="990 222 190 22">
 <path d="M994 234.500 l3.500 -4 l1.500 1.500 l2 -2 l3 4.500 z" fill="#d0d0d0"/>
 <rect x="1017" y="228" width="128" height="3" rx="1" fill="#707070"/>
 <path d="M1076.500 231 l4.500 4.500 v3 c0 1, -1 1.500, -1.500 1.500 h-6 c-1 0, -1.500 -.500, -1.500 -1.500 v-3 z" fill="#f2f2f2"/>
 <path d="M1155 235 l6 -7.500 l3 3.500 l3 -3.500 l6 7.500 z" fill="#d0d0d0"/>
</svg>
<div class="a" style="left:929px;top:245px;width:267px;height:2px;background:#3c3c3c"></div>
<!-- navigator mini preview -->
<div class="a" style="left:988px;top:114px;width:149px;height:99px;background:repeating-conic-gradient(#cbcbcb 0 25%,#fff 0 50%) 0 0/8px 8px"></div>
<svg style="left:988px;top:114px;overflow:hidden" width="149" height="99" viewBox="86 229 800 533" preserveAspectRatio="none"><use href="#fig"/></svg>
<!-- ===== right column: layers ===== -->
<div class="a" style="left:929px;top:247px;width:267px;height:28px;background:#424242"></div>
<div class="a" style="left:929px;top:247px;width:46px;height:28px;background:#535353"></div>
<div class="a" style="left:975px;top:247px;width:44px;height:27px;background:#424242;border-left:1px solid #383838;border-right:1px solid #383838"></div>
<div class="t" style="left:939px;top:253px;color:#f0f0f0;font-size:12px">图层</div>
<div class="t" style="left:983px;top:253px;color:#a8a8a8;font-size:12px">通道</div>
<svg style="left:1179px;top:257px" width="10" height="8" viewBox="0 0 10 8"><path d="M0 .500 h10 M0 3 h10 M0 5.500 h10 M0 8 h10" stroke="#c4c4c4" stroke-width="1"/></svg>
<div class="a" style="left:929px;top:275px;width:267px;height:87px;background:#535353"></div>
<!-- filter row -->
<div class="a" style="left:934px;top:283px;width:87px;height:19px;background:#454545;border:1px solid #5e5e5e;border-radius:2px"></div>
<div class="t" style="left:956px;top:285px;color:#ececec;font-size:12px">类型</div>
<div class="a" style="left:929px;top:306px;width:267px;height:1px;background:#464646"></div>
<!-- blend row -->
<div class="a" style="left:934px;top:310px;width:118px;height:19px;background:#454545;border:1px solid #5e5e5e;border-radius:2px"></div>
<div class="t" style="left:942px;top:313px;color:#ececec;font-size:12px">正常</div>
<div class="t" style="left:1060px;top:313px;color:#e2e2e2;font-size:12px">不透明度:</div>
<div class="a" style="left:1116px;top:310px;width:38px;height:19px;background:#454545"></div>
<div class="a" style="left:1155px;top:310px;width:15px;height:19px;background:#454545;border:1px solid #5e5e5e;border-radius:2px"></div>
<div class="t" style="left:1118px;top:313px;color:#ececec;font-size:12px">100%</div>
<div class="a" style="left:929px;top:333px;width:267px;height:1px;background:#464646"></div>
<!-- lock row -->
<div class="t" style="left:937px;top:339px;color:#e2e2e2;font-size:12px">锁定:</div>
<div class="t" style="left:1084px;top:339px;color:#e2e2e2;font-size:12px">填充:</div>
<div class="a" style="left:1116px;top:337px;width:38px;height:19px;background:#454545"></div>
<div class="a" style="left:1155px;top:337px;width:15px;height:19px;background:#454545;border:1px solid #5e5e5e;border-radius:2px"></div>
<div class="t" style="left:1118px;top:339px;color:#ececec;font-size:12px">100%</div>
<!-- layer list -->
<div class="a" style="left:929px;top:361px;width:267px;height:535px;background:#4d4d4d"></div>
<div class="a" style="left:929px;top:362px;width:252px;height:138px;background:#535353"></div>
<div class="a" style="left:961px;top:385px;width:220px;height:23px;background:#656565"></div>
<div class="a" style="left:929px;top:361px;width:252px;height:1px;background:#474747"></div>
<div class="a" style="left:929px;top:384px;width:252px;height:1px;background:#474747"></div>
<div class="a" style="left:929px;top:407px;width:252px;height:1px;background:#474747"></div>
<div class="a" style="left:929px;top:430px;width:252px;height:1px;background:#474747"></div>
<div class="a" style="left:929px;top:453px;width:252px;height:1px;background:#474747"></div>
<div class="a" style="left:929px;top:476px;width:252px;height:1px;background:#474747"></div>
<div class="a" style="left:929px;top:499px;width:252px;height:1px;background:#474747"></div>
<div class="a" style="left:960px;top:362px;width:1px;height:138px;background:#474747"></div>
<div class="t" style="left:1020px;top:367px;color:#ececec;font-size:12px">头发</div>
<div class="t" style="left:1020px;top:390px;color:#f4f4f4;font-size:12px">色相/饱和度 1</div>
<div class="t" style="left:1020px;top:413px;color:#ececec;font-size:12px">身体</div>
<div class="t" style="left:1020px;top:436px;color:#ececec;font-size:12px">色彩平衡 1</div>
<div class="t" style="left:1020px;top:459px;color:#ececec;font-size:12px">衣服</div>
<div class="t" style="left:990px;top:482px;color:#ececec;font-size:12px">背景</div>
<!-- ===== layers icons ===== -->
<svg style="left:929px;top:275px" width="267" height="230" viewBox="929 275 267 230">
<defs>
<g id="eye"><path d="M-6.500 0 c2 -3.600, 4.500 -4.800, 6.500 -4.800 s4.500 1.200, 6.500 4.800 c-2 3.600, -4.500 4.800, -6.500 4.800 s-4.500 -1.200, -6.500 -4.800 z" fill="#e0e0e0"/><circle cx="0" cy="0" r="2.800" fill="#6a6a6a"/><circle cx="0" cy="0" r="1.500" fill="#3c3c3c"/></g>
<g id="lbrush"><path d="M6 -6.500 c.900 .400, .500 1.700, -.300 2.600 l-6.700 7 l-1.800 -1.800 l7 -6.800 c.700 -.700, 1.300 -1.200, 1.800 -1 z" fill="#e4e4e4"/><path d="M-3.800 2.300 l1.800 1.800 c-.400 2.600, -3 3.400, -5.500 3 c1.300 -.900, 1.700 -1.700, 1.700 -3 c.200 -1.300, 1.200 -1.800, 2 -1.800 z" fill="#111"/><path d="M-3.800 2.300 l1.800 1.800 c-.400 2.600, -3 3.400, -5.500 3 c1.300 -.900, 1.700 -1.700, 1.700 -3 c.200 -1.300, 1.200 -1.800, 2 -1.800 z" fill="none" stroke="#e4e4e4" stroke-width=".800"/></g>
<g id="adj"><circle cx="0" cy="0" r="5.300" fill="#555" stroke="#e0e0e0" stroke-width="1.100"/><path d="M-3.750 3.750 A5.300 5.300 0 0 0 3.750 -3.750 z" fill="#e0e0e0"/></g>
<g id="chain" fill="none" stroke="#e0e0e0" stroke-width="1.300"><rect x="-2.500" y="-6.500" width="5" height="7" rx="2.500"/><rect x="-2.500" y="0" width="5" height="7" rx="2.500"/><path d="M0 -2.500 v5.500" stroke-width="1.100"/></g>
<g id="mask"><rect x="-7" y="-5.500" width="14" height="11" fill="#4a4a4a" stroke="#ececec" stroke-width="1.400"/><rect x="-5.300" y="-3.800" width="10.600" height="7.600" fill="#dcdcdc"/><ellipse cx="0" cy="0" rx="3.300" ry="2.900" fill="#4c4c4c"/></g>
<g id="chev"><path d="M-3.500 -1.700 l3.500 3.500 l3.500 -3.500" fill="none" stroke="#d0d0d0" stroke-width="1.200"/></g>
</defs>
<g fill="none" stroke="#e4e4e4" stroke-width="1.500"><circle cx="946.500" cy="290.500" r="3.600"/><path d="M944 293.500 l-3.500 3.800"/></g>
<use href="#chev" x="1012" y="292.500"/>
<rect x="1036.500" y="287.500" width="12" height="10" fill="none" stroke="#e4e4e4" stroke-width="1.200"/><path d="M1038.500 295.500 l3 -3.500 l2 2 l1.500 -1.500 l2 3 z" fill="#e4e4e4"/>
<use href="#adj" x="1066.500" y="292.500"/>
<path d="M1086 287 h10.500 v3 h-1.200 l-.400 -1.500 h-2.500 v8 l1.500 .400 v1.100 h-5.400 v-1.100 l1.500 -.400 v-8 h-2.500 l-.400 1.500 h-1.100 z" fill="#e4e4e4"/>
<g fill="none" stroke="#e4e4e4" stroke-width="1.200"><rect x="1110.500" y="288.500" width="9" height="9"/></g><g fill="#535353" stroke="#e4e4e4" stroke-width="1"><rect x="1109" y="287" width="3" height="3"/><rect x="1118" y="287" width="3" height="3"/><rect x="1109" y="296" width="3" height="3"/><rect x="1118" y="296" width="3" height="3"/></g>
<path d="M1136.500 286.500 h5 l3 3 v9 h-8 z" fill="none" stroke="#e4e4e4" stroke-width="1.200"/><rect x="1134" y="293" width="6" height="6" fill="#e4e4e4"/>
<rect x="1162" y="284.500" width="8" height="15" rx="4" fill="#3c3c3c"/><circle cx="1166" cy="288.500" r="3.800" fill="#d6d6d6"/>
<use href="#chev" x="1045" y="319.500"/><use href="#chev" x="1162.500" y="319.500"/><use href="#chev" x="1162.500" y="346.500"/>
<g><rect x="974" y="341" width="11" height="11" fill="#b4b4b4"/><g fill="#6a6a6a"><rect x="974" y="341" width="3.700" height="3.700"/><rect x="981.300" y="341" width="3.700" height="3.700"/><rect x="977.700" y="344.700" width="3.700" height="3.700"/><rect x="974" y="348.300" width="3.700" height="3.700"/><rect x="981.300" y="348.300" width="3.700" height="3.700"/></g></g>
<g transform="translate(1001 347)" opacity=".45"><path d="M6 -6.500 c.900 .400, .500 1.700, -.300 2.600 l-6.700 7 l-1.800 -1.800 l7 -6.800 c.700 -.700, 1.300 -1.200, 1.800 -1 z" fill="#e4e4e4"/><path d="M-3.800 2.300 l1.800 1.800 c-.400 2.600, -3 3.400, -5.500 3 c1.300 -.900, 1.700 -1.700, 1.700 -3 c.200 -1.300, 1.200 -1.800, 2 -1.800 z" fill="#e4e4e4"/></g>
<path transform="translate(1023.500 346.500) scale(.85)" d="M0 -8 l3.200 3.600 h-2.300 v3.500 h3.500 v-2.300 l3.600 3.200 l-3.600 3.200 v-2.300 h-3.500 v3.500 h2.300 l-3.200 3.600 l-3.200 -3.600 h2.300 v-3.500 h-3.500 v2.300 l-3.600 -3.200 l3.600 -3.200 v2.300 h3.500 v-3.500 h-2.300 z" fill="#e4e4e4"/>
<g fill="none" stroke="#e4e4e4" stroke-width="1.300"><path d="M1042.500 340 v10.500 h10.500 M1039.500 343.500 h10.500 v10"/><path d="M1048.500 342 l3 -2.500" stroke-width="1"/></g>
<g><rect x="1063.500" y="345.500" width="10" height="8" fill="#e4e4e4"/><path d="M1065.500 345.500 v-2 a3 3 0 0 1 6 0 v2" fill="none" stroke="#e4e4e4" stroke-width="1.400"/><rect x="1067.500" y="348" width="2" height="3" fill="#444"/></g>
<use href="#eye" x="945" y="373"/>
<use href="#lbrush" x="972.500" y="373.5"/>
<use href="#chain" x="987.500" y="372.5"/>
<use href="#mask" x="1003" y="373.0"/>
<use href="#eye" x="945" y="396"/>
<use href="#adj" x="972.500" y="396.0"/>
<use href="#chain" x="987.500" y="395.5"/>
<use href="#mask" x="1003" y="396.0"/>
<path d="M996 388.500 h-2.500 v3 M1010 388.500 h2.500 v3 M996 403.500 h-2.500 v-3 M1010 403.500 h2.500 v-3" fill="none" stroke="#f0f0f0" stroke-width="1"/>
<use href="#eye" x="945" y="419"/>
<use href="#lbrush" x="972.500" y="419.5"/>
<use href="#chain" x="987.500" y="418.5"/>
<use href="#mask" x="1003" y="419.0"/>
<use href="#eye" x="945" y="442"/>
<use href="#adj" x="972.500" y="442.0"/>
<use href="#chain" x="987.500" y="441.5"/>
<use href="#mask" x="1003" y="442.0"/>
<use href="#eye" x="945" y="465"/>
<use href="#lbrush" x="972.500" y="465.5"/>
<use href="#chain" x="987.500" y="464.5"/>
<use href="#mask" x="1003" y="465.0"/>
<rect x="939.500" y="482.5" width="10" height="10" fill="none" stroke="#5e5e5e" stroke-width="1"/>
<use href="#lbrush" x="972.500" y="488.5"/>
<g><rect x="1153.500" y="486.500" width="9" height="7.500" fill="none" stroke="#e4e4e4" stroke-width="1.200"/><path d="M1155.500 486.500 v-2 a2.500 2.500 0 0 1 5 0 v2" fill="none" stroke="#e4e4e4" stroke-width="1.200"/><rect x="1157.300" y="489.300" width="1.500" height="2" fill="#e4e4e4"/></g>
</svg>
<!-- ===== layers panel footer + watermark ===== -->
<div class="a" style="left:929px;top:872px;width:267px;height:24px;background:#515151"></div>
<svg style="left:990px;top:874px" width="190" height="20" viewBox="990 876 190 20">
 <g fill="none" stroke="#cfcfcf" stroke-width="1.100">
  <path d="M992 886 a3 3 0 0 1 6 0 M996 886 a3 3 0 0 0 6 0" opacity=".6"/>
  <rect x="1047.500" y="880.500" width="11" height="9" fill="#cfcfcf"/><circle cx="1053" cy="885" r="2.500" fill="#444" stroke="none"/>
  <circle cx="1080" cy="885" r="5"/><path d="M1076.500 888.500 l7 -7"/>
  <path d="M1100.500 881.500 h4 l1.500 1.500 h6 v7 h-11.500 z" fill="#cfcfcf"/>
  <path d="M1130.500 881.500 h6 v8 h-8 v-6 z"/>
  <path d="M1156.500 882.500 h8 v8 h-8 z M1155 882.500 h11 M1159 880.500 h3 M1159 884.500 v4.500 M1162 884.500 v4.500"/>
 </g>
 <path d="M1032 892 l3 0 l-1.500 2 z M1087 892 l3 0 l-1.500 2 z" fill="#e0e0e0"/>
</svg>
<div class="t" style="left:1022px;top:876px;font-size:11px;font-style:italic;color:#cfcfcf;line-height:14px;height:14px">fx</div>
<div class="t" style="left:908px;top:847px;font-size:34px;line-height:48px;height:48px;font-weight:400;word-spacing:2px;color:#f4f4f4;will-change:transform;font-family:'Liberation Sans','Noto Sans CJK SC',sans-serif;text-shadow:0 0 2px rgba(40,40,40,.55)">头条号 / 小黑设计</div>
</div>
</body>
</html>
